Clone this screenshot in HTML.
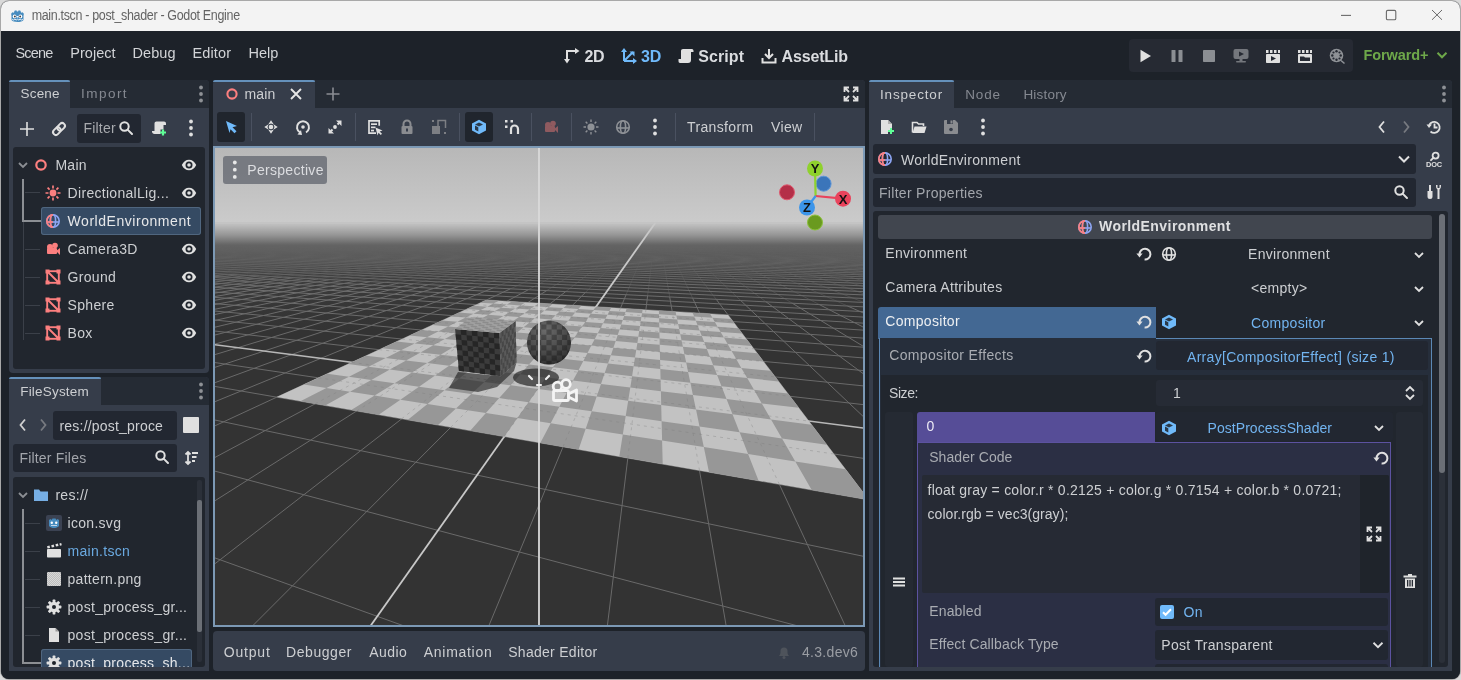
<!DOCTYPE html><html><head><meta charset="utf-8"><style>
html,body{margin:0;padding:0;width:1461px;height:680px;overflow:hidden;background:#d9d9d9}
.t{position:absolute;white-space:nowrap;font-family:"Liberation Sans",sans-serif;line-height:1}
svg{overflow:visible}
</style></head><body><div style="position:relative;width:1461px;height:680px;overflow:hidden;will-change:transform">
<div style="position:absolute;left:0px;top:0px;width:1461px;height:680px;background:#d9d9d9;"></div>
<div style="position:absolute;left:1px;top:1px;width:1459px;height:678px;background:#1d2229;border-radius:8px;box-shadow:0 0 0 1px #a8a8a8;"></div>
<div style="position:absolute;left:1px;top:1px;width:1459px;height:30px;background:#f3f3f3;border-radius:8px 8px 0 0;"></div>
<svg style="position:absolute;left:9.5px;top:7.5px;" width="15" height="15" viewBox="0 0 16 16"><path d="M1.2 6.2L2.6 4.6l1.6.5.6-2.1 1.9-.5.7 1.2h1.2l.7-1.2 1.9.5.6 2.1 1.6-.5 1.4 1.6-.4 2.4v4.2C13.3 14.4 11 15 8 15s-5.3-.6-6.4-2.1V8.6z" fill="#478cbf"/><g fill="#fff"><circle cx="4.9" cy="9" r="2"/><circle cx="11.1" cy="9" r="2"/></g><g fill="#414042"><circle cx="5.2" cy="9.1" r="1"/><circle cx="10.8" cy="9.1" r="1"/></g><rect x="7.2" y="8.4" width="1.6" height="1.8" rx=".4" fill="#fff"/><path d="M2.3 12.2l1.6.6 1.3-.9 1.4.9 1.4-.9 1.4.9 1.4-.9 1.3.9 1.6-.6" fill="none" stroke="#fff" stroke-width="0.9"/></svg>
<div class="t" style="left:31.7px;top:10.22px;font-size:12.5px;color:#646464;letter-spacing:-0.3392314189189186px;transform:scaleY(1.12);transform-origin:0 80%;">main.tscn - post_shader - Godot Engine</div>
<svg style="position:absolute;left:1340px;top:8px;" width="14" height="14" viewBox="0 0 14 14"><line x1="1" y1="7.4" x2="11" y2="7.4" stroke="#6a6a6a" stroke-width="1.1"/></svg>
<svg style="position:absolute;left:1384px;top:8px;" width="14" height="14" viewBox="0 0 14 14"><rect x="2.4" y="2.4" width="9.4" height="9.4" rx="1.3" fill="none" stroke="#6a6a6a" stroke-width="1.1"/></svg>
<svg style="position:absolute;left:1430px;top:8px;" width="14" height="14" viewBox="0 0 14 14"><path d="M2 2L12 11.8M12 2L2 11.8" stroke="#6a6a6a" stroke-width="1"/></svg>
<div class="t" style="left:15.4px;top:45.73px;font-size:14.5px;color:#d2d4d7;letter-spacing:-0.7785156250000007px;">Scene</div>
<div class="t" style="left:70.2px;top:45.73px;font-size:14.5px;color:#d2d4d7;letter-spacing:0.045312500000000235px;">Project</div>
<div class="t" style="left:132.4px;top:45.73px;font-size:14.5px;color:#d2d4d7;letter-spacing:0.11796875000000107px;">Debug</div>
<div class="t" style="left:192.4px;top:45.73px;font-size:14.5px;color:#d2d4d7;letter-spacing:0.14437500000000086px;">Editor</div>
<div class="t" style="left:248.5px;top:45.73px;font-size:14.5px;color:#d2d4d7;letter-spacing:-0.040624999999999765px;">Help</div>
<svg style="position:absolute;left:564.0px;top:48.0px;" width="16" height="16" viewBox="0 0 16 16"><g fill="none" stroke="#e0e0e0" stroke-width="2"><path d="M3 14V3h9"/></g><g fill="#e0e0e0"><path d="M11 0l4.5 3L11 6z"/><path d="M0 11l3 4.5L6 11z"/></g></svg>
<svg style="position:absolute;left:621.0px;top:48.0px;" width="16" height="16" viewBox="0 0 16 16"><g fill="none" stroke="#70bafa" stroke-width="2"><path d="M3 13V2.5M3 13h10.5M3 13l9-9"/></g><g fill="#70bafa"><path d="M0 4l3-4 3 4z"/><path d="M12 10l4 3-4 3z"/><path d="M8.5 3.5h5v5z"/></g></svg>
<svg style="position:absolute;left:678.0px;top:48.0px;" width="16" height="16" viewBox="0 0 16 16"><path d="M5 1h9c1 0 1.5 1 1.5 2v1H13v8c0 2-1 3-3 3H2c-1 0-1.5-1-1.5-2v-2H3V3c0-1.2.8-2 2-2z" fill="#e0e0e0"/></svg>
<svg style="position:absolute;left:761.0px;top:48.0px;" width="16" height="16" viewBox="0 0 16 16"><g fill="none" stroke="#e0e0e0" stroke-width="2"><path d="M8 1v9M4 6l4 4 4-4M1.5 10v4.5h13V10"/></g></svg>
<div class="t" style="left:584.4px;top:49.26px;font-size:16px;color:#dadcdf;letter-spacing:-0.2531250000000007px;font-weight:bold;">2D</div>
<div class="t" style="left:641px;top:49.26px;font-size:16px;color:#70bafa;letter-spacing:-0.2531250000000007px;font-weight:bold;">3D</div>
<div class="t" style="left:698.2px;top:49.26px;font-size:16px;color:#dadcdf;letter-spacing:0.09124999999999943px;font-weight:bold;">Script</div>
<div class="t" style="left:781.5px;top:49.26px;font-size:16px;color:#dadcdf;letter-spacing:-0.15290178571428573px;font-weight:bold;">AssetLib</div>
<div style="position:absolute;left:1129px;top:39px;width:224px;height:33px;background:#262a33;border-radius:4px;"></div>
<svg style="position:absolute;left:1136.5px;top:47.5px;" width="16" height="16" viewBox="0 0 16 16"><path d="M3.5 1.8L14 8 3.5 14.2z" fill="#e0e0e0"/></svg>
<svg style="position:absolute;left:1168.7px;top:47.5px;" width="16" height="16" viewBox="0 0 16 16"><g fill="#8b8e93"><rect x="2.5" y="2" width="4" height="12" rx="0.6"/><rect x="9.5" y="2" width="4" height="12" rx="0.6"/></g></svg>
<svg style="position:absolute;left:1200.7px;top:47.5px;" width="16" height="16" viewBox="0 0 16 16"><rect x="2" y="2" width="12" height="12" rx="0.8" fill="#8b8e93"/></svg>
<svg style="position:absolute;left:1232.6px;top:47.5px;" width="16" height="16" viewBox="0 0 16 16"><rect x="0.5" y="1" width="15" height="10" rx="2" fill="#74777d"/><path d="M6 3.5l5 2.5-5 2.5z" fill="#262a33"/><rect x="6.5" y="11" width="3" height="2" fill="#74777d"/><rect x="3" y="13" width="10" height="1.6" rx="0.8" fill="#74777d"/></svg>
<svg style="position:absolute;left:1264.9px;top:47.5px;" width="16" height="16" viewBox="0 0 16 16"><g fill="#e0e0e0"><rect x="1" y="6" width="14" height="9" rx="0.8"/><path d="M1 2h2.5v3H1zM5 2h2.5v3H5zM9 2h2.5v3H9zM13 2h2v3h-2z"/></g><path d="M6 8l5 2.5-5 2.5z" fill="#262a33"/></svg>
<svg style="position:absolute;left:1296.8px;top:47.5px;" width="16" height="16" viewBox="0 0 16 16"><g fill="#e0e0e0"><rect x="1" y="6" width="14" height="9" rx="0.8"/><path d="M1 2h2.5v3H1zM5 2h2.5v3H5zM9 2h2.5v3H9zM13 2h2v3h-2z"/></g><path d="M3 8.5h4l1 1h5v3.5H3z" fill="#262a33"/></svg>
<svg style="position:absolute;left:1329.0px;top:47.5px;" width="16" height="16" viewBox="0 0 16 16"><circle cx="7.5" cy="7.5" r="6.8" fill="#8e9196"/><g fill="#262a33"><circle cx="7.5" cy="3.3" r="1.2"/><circle cx="7.5" cy="11.7" r="1.2"/><circle cx="3.3" cy="7.5" r="1.2"/><circle cx="11.7" cy="7.5" r="1.2"/><circle cx="4.5" cy="4.5" r="1.1"/><circle cx="10.5" cy="10.5" r="1.1"/><circle cx="10.5" cy="4.5" r="1.1"/><circle cx="4.5" cy="10.5" r="1.1"/></g><path d="M12 12.5l3.5 3" stroke="#8e9196" stroke-width="1.6"/></svg>
<div class="t" style="left:1363.4px;top:48.23px;font-size:14.5px;color:#6ea84a;letter-spacing:-0.08102678571428612px;font-weight:bold;">Forward+</div>
<svg style="position:absolute;left:1434.0px;top:47.0px;" width="16" height="16" viewBox="0 0 16 16"><path d="M3.5 5.75L8 10.25L12.5 5.75" fill="none" stroke="#6ea84a" stroke-width="2"/></svg>
<div style="position:absolute;left:9px;top:80px;width:200px;height:293px;background:#363d4a;border-radius:4px;"></div>
<div style="position:absolute;left:70px;top:80px;width:139px;height:28px;background:#252b34;border-radius:0 4px 0 0;"></div>
<div style="position:absolute;left:9px;top:80px;width:61px;height:2px;background:#6591bb;border-radius:3px 3px 0 0;"></div>
<div class="t" style="left:20.5px;top:87.37px;font-size:13.5px;color:#cdcfd2;letter-spacing:0.2px;">Scene</div>
<div class="t" style="left:81px;top:87.37px;font-size:13.5px;color:#858991;letter-spacing:1.46875px;">Import</div>
<svg style="position:absolute;left:193.0px;top:86.0px;" width="16" height="16" viewBox="0 0 16 16"><g fill="#8e9196"><circle cx="8" cy="1.50" r="1.9"/><circle cx="8" cy="8" r="1.9"/><circle cx="8" cy="14.50" r="1.9"/></g></svg>
<svg style="position:absolute;left:19.1px;top:120.5px;" width="16" height="16" viewBox="0 0 16 16"><path d="M8 1.0V15.0M1.0 8H15.0" stroke="#e0e0e0" stroke-width="1.6"/></svg>
<svg style="position:absolute;left:50.9px;top:120.5px;" width="16" height="16" viewBox="0 0 16 16"><g fill="none" stroke="#e0e0e0" stroke-width="2" transform="rotate(-45 8 8)"><rect x="0.8" y="5.2" width="8.4" height="5.6" rx="2.8"/><rect x="6.8" y="5.2" width="8.4" height="5.6" rx="2.8"/></g></svg>
<div style="position:absolute;left:77px;top:114px;width:64px;height:28.5px;background:#222731;border-radius:3px;"></div>
<div class="t" style="left:83.5px;top:121.15px;font-size:14px;color:#a8aaae;letter-spacing:0.2px;">Filter</div>
<svg style="position:absolute;left:118.4px;top:120.0px;" width="16" height="16" viewBox="0 0 16 16"><g fill="none" stroke="#e0e0e0" stroke-width="2"><circle cx="6.5" cy="6.5" r="4.2"/><path d="M9.6 9.6l4.4 4.4" stroke-linecap="round"/></g></svg>
<svg style="position:absolute;left:150.5px;top:120.0px;" width="16" height="16" viewBox="0 0 16 16"><path d="M5.5 1.5h7.5c1.2 0 2 .8 2 2v1.5h-2.5v4.5h-3v4.5H3.5c-1.4 0-2.5-1-2.5-2.2V11h2.5V3.5c0-1.2.8-2 2-2z" fill="#e0e0e0"/><path d="M12 9.5v6M9 12.5h6" stroke="#5fff97" stroke-width="2.2"/></svg>
<svg style="position:absolute;left:183.0px;top:120.3px;" width="16" height="16" viewBox="0 0 16 16"><g fill="#e0e0e0"><circle cx="8" cy="1.50" r="1.9"/><circle cx="8" cy="8" r="1.9"/><circle cx="8" cy="14.50" r="1.9"/></g></svg>
<div style="position:absolute;left:13px;top:147px;width:192px;height:222px;background:#21262e;border-radius:3px;"></div>
<div style="position:absolute;left:22px;top:179px;width:2px;height:42px;background:#8c8f94;"></div>
<div style="position:absolute;left:22px;top:220px;width:19px;height:2px;background:#8c8f94;"></div>
<div style="position:absolute;left:22.5px;top:222px;width:1px;height:118px;background:#3b4049;"></div>
<div style="position:absolute;left:25px;top:192px;width:15px;height:1px;background:#3b4049;"></div>
<div style="position:absolute;left:25px;top:249px;width:15px;height:1px;background:#3b4049;"></div>
<div style="position:absolute;left:25px;top:277px;width:15px;height:1px;background:#3b4049;"></div>
<div style="position:absolute;left:25px;top:305px;width:15px;height:1px;background:#3b4049;"></div>
<div style="position:absolute;left:25px;top:333px;width:15px;height:1px;background:#3b4049;"></div>
<div style="position:absolute;left:41px;top:207px;width:160px;height:28px;background:#354a63;border-radius:3px;box-shadow:inset 0 0 0 1px #50667f;"></div>
<svg style="position:absolute;left:14.7px;top:157.0px;" width="16" height="16" viewBox="0 0 16 16"><path d="M4.0 6.0L8 10.0L12.0 6.0" fill="none" stroke="#8c8f94" stroke-width="1.8"/></svg>
<svg style="position:absolute;left:33.0px;top:157.0px;" width="16" height="16" viewBox="0 0 16 16"><circle cx="8" cy="8" r="4.7" fill="none" stroke="#fc7f7f" stroke-width="2.2"/></svg>
<div class="t" style="left:55.4px;top:158.25px;font-size:14px;color:#cdcfd2;letter-spacing:0.3px;">Main</div>
<svg style="position:absolute;left:45.0px;top:184.8px;" width="16" height="16" viewBox="0 0 16 16"><circle cx="8" cy="8" r="3.4" fill="#fc7f7f"/><g stroke="#fc7f7f" stroke-width="1.7"><path d="M8 0.5v3M8 12.5v3M0.5 8h3M12.5 8h3M2.6 2.6l2 2M11.4 11.4l2 2M13.4 2.6l-2 2M4.6 11.4l-2 2"/></g></svg>
<div class="t" style="left:67.6px;top:186.15px;font-size:14px;color:#cdcfd2;letter-spacing:0.3px;">DirectionalLig...</div>
<svg style="position:absolute;left:45.0px;top:213.0px;" width="16" height="16" viewBox="0 0 16 16"><defs><clipPath id="gl5302210"><rect x="0" y="0" width="8" height="16"/></clipPath></defs><g fill="none" stroke-width="1.6"><g stroke="#8da5f3"><circle cx="8" cy="8" r="6.2"/><ellipse cx="8" cy="8" rx="2.6" ry="6.2"/><path d="M2 9h12"/></g><g stroke="#fc7f7f" clip-path="url(#gl5302210)"><circle cx="8" cy="8" r="6.2"/><ellipse cx="8" cy="8" rx="2.6" ry="6.2"/><path d="M2 9h12"/></g></g></svg>
<div class="t" style="left:67.6px;top:214.35px;font-size:14px;color:#e6e7e9;letter-spacing:0.5401041666666667px;">WorldEnvironment</div>
<svg style="position:absolute;left:45.0px;top:241.0px;" width="16" height="16" viewBox="0 0 16 16"><g fill="#fc7f7f"><circle cx="5" cy="6" r="3"/><circle cx="10" cy="4.5" r="2.8"/><rect x="2" y="7" width="10" height="6" rx="1"/><path d="M11 10l4-3v7z"/></g></svg>
<div class="t" style="left:67.6px;top:242.35px;font-size:14px;color:#cdcfd2;letter-spacing:0.3px;">Camera3D</div>
<svg style="position:absolute;left:45.0px;top:269.0px;" width="16" height="16" viewBox="0 0 16 16"><g fill="none" stroke="#fc7f7f" stroke-width="1.9"><rect x="2.2" y="2.2" width="11.6" height="11.6"/><path d="M2.5 2.5l11 11"/></g><g fill="#fc7f7f"><rect x="0.5" y="0.5" width="4" height="4"/><rect x="11.5" y="0.5" width="4" height="4"/><rect x="0.5" y="11.5" width="4" height="4"/><rect x="11.5" y="11.5" width="4" height="4"/></g></svg>
<div class="t" style="left:67.6px;top:270.35px;font-size:14px;color:#cdcfd2;letter-spacing:0.3px;">Ground</div>
<svg style="position:absolute;left:45.0px;top:297.0px;" width="16" height="16" viewBox="0 0 16 16"><g fill="none" stroke="#fc7f7f" stroke-width="1.9"><rect x="2.2" y="2.2" width="11.6" height="11.6"/><path d="M2.5 2.5l11 11"/></g><g fill="#fc7f7f"><rect x="0.5" y="0.5" width="4" height="4"/><rect x="11.5" y="0.5" width="4" height="4"/><rect x="0.5" y="11.5" width="4" height="4"/><rect x="11.5" y="11.5" width="4" height="4"/></g></svg>
<div class="t" style="left:67.6px;top:298.35px;font-size:14px;color:#cdcfd2;letter-spacing:0.3px;">Sphere</div>
<svg style="position:absolute;left:45.0px;top:325.0px;" width="16" height="16" viewBox="0 0 16 16"><g fill="none" stroke="#fc7f7f" stroke-width="1.9"><rect x="2.2" y="2.2" width="11.6" height="11.6"/><path d="M2.5 2.5l11 11"/></g><g fill="#fc7f7f"><rect x="0.5" y="0.5" width="4" height="4"/><rect x="11.5" y="0.5" width="4" height="4"/><rect x="0.5" y="11.5" width="4" height="4"/><rect x="11.5" y="11.5" width="4" height="4"/></g></svg>
<div class="t" style="left:67.6px;top:326.35px;font-size:14px;color:#cdcfd2;letter-spacing:0.3px;">Box</div>
<svg style="position:absolute;left:180.8px;top:157.0px;" width="16" height="16" viewBox="0 0 16 16"><path d="M0.8 8C2.6 4.3 5.1 2.7 8 2.7s5.4 1.6 7.2 5.3c-1.8 3.7-4.3 5.3-7.2 5.3S2.6 11.7.8 8z" fill="#e0e0e0"/><circle cx="8" cy="8" r="3.5" fill="#21262e"/><circle cx="8" cy="8" r="1.8" fill="#e0e0e0"/></svg>
<svg style="position:absolute;left:180.8px;top:184.8px;" width="16" height="16" viewBox="0 0 16 16"><path d="M0.8 8C2.6 4.3 5.1 2.7 8 2.7s5.4 1.6 7.2 5.3c-1.8 3.7-4.3 5.3-7.2 5.3S2.6 11.7.8 8z" fill="#e0e0e0"/><circle cx="8" cy="8" r="3.5" fill="#21262e"/><circle cx="8" cy="8" r="1.8" fill="#e0e0e0"/></svg>
<svg style="position:absolute;left:180.8px;top:241.0px;" width="16" height="16" viewBox="0 0 16 16"><path d="M0.8 8C2.6 4.3 5.1 2.7 8 2.7s5.4 1.6 7.2 5.3c-1.8 3.7-4.3 5.3-7.2 5.3S2.6 11.7.8 8z" fill="#e0e0e0"/><circle cx="8" cy="8" r="3.5" fill="#21262e"/><circle cx="8" cy="8" r="1.8" fill="#e0e0e0"/></svg>
<svg style="position:absolute;left:180.8px;top:269.0px;" width="16" height="16" viewBox="0 0 16 16"><path d="M0.8 8C2.6 4.3 5.1 2.7 8 2.7s5.4 1.6 7.2 5.3c-1.8 3.7-4.3 5.3-7.2 5.3S2.6 11.7.8 8z" fill="#e0e0e0"/><circle cx="8" cy="8" r="3.5" fill="#21262e"/><circle cx="8" cy="8" r="1.8" fill="#e0e0e0"/></svg>
<svg style="position:absolute;left:180.8px;top:297.0px;" width="16" height="16" viewBox="0 0 16 16"><path d="M0.8 8C2.6 4.3 5.1 2.7 8 2.7s5.4 1.6 7.2 5.3c-1.8 3.7-4.3 5.3-7.2 5.3S2.6 11.7.8 8z" fill="#e0e0e0"/><circle cx="8" cy="8" r="3.5" fill="#21262e"/><circle cx="8" cy="8" r="1.8" fill="#e0e0e0"/></svg>
<svg style="position:absolute;left:180.8px;top:325.0px;" width="16" height="16" viewBox="0 0 16 16"><path d="M0.8 8C2.6 4.3 5.1 2.7 8 2.7s5.4 1.6 7.2 5.3c-1.8 3.7-4.3 5.3-7.2 5.3S2.6 11.7.8 8z" fill="#e0e0e0"/><circle cx="8" cy="8" r="3.5" fill="#21262e"/><circle cx="8" cy="8" r="1.8" fill="#e0e0e0"/></svg>
<div style="position:absolute;left:9px;top:377px;width:200px;height:294px;background:#363d4a;border-radius:4px;"></div>
<div style="position:absolute;left:101px;top:377px;width:108px;height:28px;background:#252b34;border-radius:0 4px 0 0;"></div>
<div style="position:absolute;left:9px;top:377px;width:92px;height:2px;background:#6591bb;border-radius:3px 3px 0 0;"></div>
<div class="t" style="left:20.2px;top:384.57px;font-size:13.5px;color:#cdcfd2;letter-spacing:0.2px;">FileSystem</div>
<svg style="position:absolute;left:193.0px;top:383.0px;" width="16" height="16" viewBox="0 0 16 16"><g fill="#8e9196"><circle cx="8" cy="1.50" r="1.9"/><circle cx="8" cy="8" r="1.9"/><circle cx="8" cy="14.50" r="1.9"/></g></svg>
<svg style="position:absolute;left:15.0px;top:417.0px;" width="16" height="16" viewBox="0 0 16 16"><path d="M10 2.5L5.5 8L10 13.5" fill="none" stroke="#d0d0d0" stroke-width="1.8"/></svg>
<svg style="position:absolute;left:35.0px;top:417.0px;" width="16" height="16" viewBox="0 0 16 16"><path d="M6 2.5L10.5 8L6 13.5" fill="none" stroke="#777a80" stroke-width="1.8"/></svg>
<div style="position:absolute;left:53px;top:411px;width:124px;height:29px;background:#222731;border-radius:3px;"></div>
<div class="t" style="left:59.5px;top:418.65px;font-size:14px;color:#cdcfd2;letter-spacing:0.2px;">res://post_proce</div>
<div style="position:absolute;left:183px;top:417px;width:16px;height:16px;background:#e0e0e0;border-radius:1px;"></div>
<div style="position:absolute;left:13px;top:444px;width:164px;height:28px;background:#222731;border-radius:3px;"></div>
<div class="t" style="left:19.4px;top:451.15px;font-size:14px;color:#a3a6ac;letter-spacing:0.2px;">Filter Files</div>
<svg style="position:absolute;left:153.8px;top:449.4px;" width="16" height="16" viewBox="0 0 16 16"><g fill="none" stroke="#e0e0e0" stroke-width="2"><circle cx="6.5" cy="6.5" r="4.2"/><path d="M9.6 9.6l4.4 4.4" stroke-linecap="round"/></g></svg>
<svg style="position:absolute;left:183.0px;top:450.0px;" width="16" height="16" viewBox="0 0 16 16"><g stroke="#e0e0e0" stroke-width="1.8" fill="none"><path d="M5 2v12M2.5 4.5L5 2l2.5 2.5M2.5 11.5L5 14l2.5-2.5"/><path d="M9 3h6M9 7h4.5M9 11h3"/></g></svg>
<div style="position:absolute;left:13px;top:477px;width:192px;height:190px;background:#21262e;border-radius:3px;"></div>
<div style="position:absolute;left:22px;top:509px;width:2px;height:155px;background:#8c8f94;"></div>
<div style="position:absolute;left:22px;top:662px;width:19px;height:2px;background:#8c8f94;"></div>
<div style="position:absolute;left:25px;top:523px;width:15px;height:1px;background:#3b4049;"></div>
<div style="position:absolute;left:25px;top:551px;width:15px;height:1px;background:#3b4049;"></div>
<div style="position:absolute;left:25px;top:579px;width:15px;height:1px;background:#3b4049;"></div>
<div style="position:absolute;left:25px;top:607px;width:15px;height:1px;background:#3b4049;"></div>
<div style="position:absolute;left:25px;top:635px;width:15px;height:1px;background:#3b4049;"></div>
<div style="position:absolute;left:41px;top:649px;width:151px;height:30px;background:#354a63;border-radius:3px;box-shadow:inset 0 0 0 1px #50667f;"></div>
<svg style="position:absolute;left:14.7px;top:487.0px;" width="16" height="16" viewBox="0 0 16 16"><path d="M4.0 6.0L8 10.0L12.0 6.0" fill="none" stroke="#8c8f94" stroke-width="1.8"/></svg>
<svg style="position:absolute;left:33.0px;top:487.0px;" width="16" height="16" viewBox="0 0 16 16"><path d="M1 2.5h5l1.5 2H15v9.5H1z" fill="#76aee4"/></svg>
<div class="t" style="left:55.4px;top:488.35px;font-size:14px;color:#cdcfd2;letter-spacing:0.3px;">res://</div>
<svg style="position:absolute;left:45.5px;top:514.8px;" width="16" height="16" viewBox="0 0 16 16"><rect x="0" y="0" width="16" height="16" rx="2" fill="#3b4252"/><path d="M3 5l1.5-1 1 1 1-1.5h3l1 1.5 1-1 1.5 1v6c-1.5 1.5-3 2-5 2s-3.5-.5-5-2z" fill="#478cbf"/><g fill="#fff"><circle cx="5.8" cy="7.8" r="1.2"/><circle cx="10.2" cy="7.8" r="1.2"/></g><path d="M5 10.5h6" stroke="#dfe9f5" stroke-width="0.8"/></svg>
<div class="t" style="left:67.5px;top:516.15px;font-size:14px;color:#cdcfd2;letter-spacing:0.3px;">icon.svg</div>
<svg style="position:absolute;left:45.5px;top:542.7px;" width="16" height="16" viewBox="0 0 16 16"><g fill="#e0e0e0"><rect x="1" y="6" width="14" height="8.5" rx="0.8"/><path d="M1 3.2l2.5-.6.6 2.3-2.5.6zM5.2 2.2l2.5-.6.6 2.3-2.5.6zM9.4 1.2l2.5-.6.6 2.3-2.5.6zM13.4.4l1.8-.4.6 2.3-1.8.4z"/></g></svg>
<div class="t" style="left:67.5px;top:544.05px;font-size:14px;color:#6aa9e0;letter-spacing:0.3px;">main.tscn</div>
<svg style="position:absolute;left:45.5px;top:570.9px;" width="16" height="16" viewBox="0 0 16 16"><defs><pattern id="pt" width="2" height="2" patternUnits="userSpaceOnUse"><rect width="2" height="2" fill="#d8d8d8"/><rect width="1" height="1" fill="#bdbdbd"/><rect x="1" y="1" width="1" height="1" fill="#bdbdbd"/></pattern></defs><rect x="1" y="1" width="14" height="14" rx="1" fill="url(#pt)"/></svg>
<div class="t" style="left:67.5px;top:572.25px;font-size:14px;color:#cdcfd2;letter-spacing:0.3px;">pattern.png</div>
<svg style="position:absolute;left:45.5px;top:598.5px;" width="16" height="16" viewBox="0 0 16 16"><g fill="#e0e0e0"><rect x="6.6" y="0.6" width="2.8" height="4" rx="0.6" transform="rotate(0 8 8)"/><rect x="6.6" y="0.6" width="2.8" height="4" rx="0.6" transform="rotate(45 8 8)"/><rect x="6.6" y="0.6" width="2.8" height="4" rx="0.6" transform="rotate(90 8 8)"/><rect x="6.6" y="0.6" width="2.8" height="4" rx="0.6" transform="rotate(135 8 8)"/><rect x="6.6" y="0.6" width="2.8" height="4" rx="0.6" transform="rotate(180 8 8)"/><rect x="6.6" y="0.6" width="2.8" height="4" rx="0.6" transform="rotate(225 8 8)"/><rect x="6.6" y="0.6" width="2.8" height="4" rx="0.6" transform="rotate(270 8 8)"/><rect x="6.6" y="0.6" width="2.8" height="4" rx="0.6" transform="rotate(315 8 8)"/><circle cx="8" cy="8" r="5.2"/></g><circle cx="8" cy="8" r="2" fill="#1d2229"/></svg>
<div class="t" style="left:67.5px;top:599.85px;font-size:14px;color:#cdcfd2;letter-spacing:0.3px;">post_process_gr...</div>
<svg style="position:absolute;left:45.5px;top:626.7px;" width="16" height="16" viewBox="0 0 16 16"><path d="M3 1h6.5l3.5 3.5V15H3z" fill="#e0e0e0"/><path d="M9.5 1v3.5H13" fill="#999" /></svg>
<div class="t" style="left:67.5px;top:628.05px;font-size:14px;color:#cdcfd2;letter-spacing:0.3px;">post_process_gr...</div>
<svg style="position:absolute;left:45.5px;top:654.5px;" width="16" height="16" viewBox="0 0 16 16"><g fill="#e0e0e0"><rect x="6.6" y="0.6" width="2.8" height="4" rx="0.6" transform="rotate(0 8 8)"/><rect x="6.6" y="0.6" width="2.8" height="4" rx="0.6" transform="rotate(45 8 8)"/><rect x="6.6" y="0.6" width="2.8" height="4" rx="0.6" transform="rotate(90 8 8)"/><rect x="6.6" y="0.6" width="2.8" height="4" rx="0.6" transform="rotate(135 8 8)"/><rect x="6.6" y="0.6" width="2.8" height="4" rx="0.6" transform="rotate(180 8 8)"/><rect x="6.6" y="0.6" width="2.8" height="4" rx="0.6" transform="rotate(225 8 8)"/><rect x="6.6" y="0.6" width="2.8" height="4" rx="0.6" transform="rotate(270 8 8)"/><rect x="6.6" y="0.6" width="2.8" height="4" rx="0.6" transform="rotate(315 8 8)"/><circle cx="8" cy="8" r="5.2"/></g><circle cx="8" cy="8" r="2" fill="#1d2229"/></svg>
<div class="t" style="left:67.5px;top:655.85px;font-size:14px;color:#e6e7e9;letter-spacing:0.3px;">post_process_sh...</div>
<div style="position:absolute;left:9px;top:667px;width:200px;height:4px;background:#363d4a;"></div>
<div style="position:absolute;left:196.5px;top:480px;width:5px;height:182px;background:#2b3039;border-radius:2px;"></div>
<div style="position:absolute;left:196.5px;top:500px;width:5px;height:132px;background:#6b6f76;border-radius:2px;"></div>
<div style="position:absolute;left:213px;top:80px;width:652px;height:547px;background:#363d4a;border-radius:4px;"></div>
<div style="position:absolute;left:315px;top:80px;width:550px;height:28px;background:#252b34;border-radius:0 4px 0 0;"></div>
<div style="position:absolute;left:213px;top:80px;width:102px;height:2px;background:#6591bb;border-radius:3px 3px 0 0;"></div>
<svg style="position:absolute;left:223.9px;top:86.0px;" width="16" height="16" viewBox="0 0 16 16"><circle cx="8" cy="8" r="4.6" fill="none" stroke="#fc7f7f" stroke-width="2.1"/></svg>
<div class="t" style="left:244.4px;top:86.95px;font-size:14px;color:#cdcfd2;letter-spacing:0.2px;">main</div>
<svg style="position:absolute;left:288.0px;top:86.0px;" width="16" height="16" viewBox="0 0 16 16"><path d="M3.0 3.0L13.0 13.0M13.0 3.0L3.0 13.0" stroke="#e6e6e6" stroke-width="1.9"/></svg>
<svg style="position:absolute;left:324.9px;top:86.0px;" width="16" height="16" viewBox="0 0 16 16"><path d="M8 1.5V14.5M1.5 8H14.5" stroke="#8a8d93" stroke-width="1.6"/></svg>
<svg style="position:absolute;left:843.0px;top:86.0px;" width="16" height="16" viewBox="0 0 16 16"><g stroke="#e0e0e0" stroke-width="1.8" fill="none"><path d="M1.5 6V1.5H6M1.5 1.5l4.5 4.5M10 1.5h4.5V6M14.5 1.5L10 6M1.5 10v4.5H6M1.5 14.5L6 10M14.5 10v4.5H10M14.5 14.5L10 10"/></g></svg>
<div style="position:absolute;left:217px;top:112px;width:28px;height:30px;background:#20252d;border-radius:3px;"></div>
<div style="position:absolute;left:465px;top:112px;width:28px;height:30px;background:#20252d;border-radius:3px;"></div>
<div style="position:absolute;left:250.5px;top:113px;width:1px;height:28px;background:#4a5160;"></div>
<div style="position:absolute;left:354.5px;top:113px;width:1px;height:28px;background:#4a5160;"></div>
<div style="position:absolute;left:458.5px;top:113px;width:1px;height:28px;background:#4a5160;"></div>
<div style="position:absolute;left:530.5px;top:113px;width:1px;height:28px;background:#4a5160;"></div>
<div style="position:absolute;left:570.5px;top:113px;width:1px;height:28px;background:#4a5160;"></div>
<div style="position:absolute;left:674.5px;top:113px;width:1px;height:28px;background:#4a5160;"></div>
<div style="position:absolute;left:813.5px;top:113px;width:1px;height:28px;background:#4a5160;"></div>
<svg style="position:absolute;left:223.0px;top:119.0px;" width="16" height="16" viewBox="0 0 16 16"><path d="M3 2l11 5-4.5 1.3 4 4-2 2-4-4L6.5 14z" fill="#70bafa"/></svg>
<svg style="position:absolute;left:263.0px;top:119.0px;" width="16" height="16" viewBox="0 0 16 16"><g fill="#e0e0e0"><path d="M5.2 5.6L8 1.3l2.8 4.3L8 4.5z" transform="rotate(0 8 8)"/><path d="M5.2 5.6L8 1.3l2.8 4.3L8 4.5z" transform="rotate(90 8 8)"/><path d="M5.2 5.6L8 1.3l2.8 4.3L8 4.5z" transform="rotate(180 8 8)"/><path d="M5.2 5.6L8 1.3l2.8 4.3L8 4.5z" transform="rotate(270 8 8)"/><circle cx="8" cy="8" r="2.3"/></g></svg>
<svg style="position:absolute;left:295.0px;top:119.0px;" width="16" height="16" viewBox="0 0 16 16"><path d="M5 13.5A6 6 0 1 1 11 13.5" fill="none" stroke="#e0e0e0" stroke-width="2"/><path d="M2.5 15.5L6 11l1 5z" fill="#e0e0e0"/><circle cx="8" cy="8" r="1.8" fill="#e0e0e0"/></svg>
<svg style="position:absolute;left:327.0px;top:119.0px;" width="16" height="16" viewBox="0 0 16 16"><g fill="#e0e0e0"><path d="M9 1.5h5.5V7zM7 14.5H1.5V9z"/><circle cx="8" cy="8" r="1.9"/></g><path d="M12 4L10.5 5.5M4 12l1.5-1.5" stroke="#e0e0e0" stroke-width="2"/></svg>
<svg style="position:absolute;left:366.6px;top:119.0px;" width="16" height="16" viewBox="0 0 16 16"><path d="M9 14.2H2V1.8h10.2v5" fill="none" stroke="#e0e0e0" stroke-width="1.7"/><g fill="#e0e0e0"><rect x="4" y="4.3" width="6" height="1.7"/><rect x="4" y="7.5" width="4.5" height="1.7"/><rect x="4" y="10.7" width="3" height="1.7"/><path d="M8.5 8.5l7 3-2.8 1 2.3 2.3-1.2 1.2-2.3-2.3-1 2.8z"/></g></svg>
<svg style="position:absolute;left:399.0px;top:119.0px;" width="16" height="16" viewBox="0 0 16 16"><path d="M4.5 7V5a3.5 3.5 0 0 1 7 0v2" fill="none" stroke="#8a8c90" stroke-width="2"/><rect x="2.5" y="7" width="11" height="8" rx="1" fill="#8a8c90"/><rect x="7" y="9.5" width="2" height="3" fill="#363d4a"/></svg>
<svg style="position:absolute;left:431.0px;top:119.0px;" width="16" height="16" viewBox="0 0 16 16"><g fill="#7d7f84"><rect x="1" y="7" width="8" height="8"/><rect x="1" y="1" width="2" height="2"/><rect x="13" y="13" width="2" height="2"/></g><path d="M7 7V1.5h7.5V9" fill="none" stroke="#7d7f84" stroke-width="1.5"/></svg>
<svg style="position:absolute;left:471.0px;top:119.0px;" width="16" height="16" viewBox="0 0 16 16"><path d="M8 0.8l7 3.6v7.2L8 15.2l-7-3.6V4.4z" fill="#70bafa"/><path d="M4 5.5L8 3.5l4 2-4 2z" fill="#1d2229" opacity="0.85"/><path d="M4 6.5l3.3 1.7v4.3L4 10.8z" fill="#1d2229" opacity="0.85"/></svg>
<svg style="position:absolute;left:503.5px;top:119.0px;" width="16" height="16" viewBox="0 0 16 16"><g fill="#e0e0e0"><rect x="1" y="1" width="2.5" height="2.5"/><rect x="6.5" y="1" width="2.5" height="2.5"/><rect x="1" y="6.5" width="2.5" height="2.5"/></g><path d="M7 15V10a3.5 3.5 0 0 1 7 0v5" fill="none" stroke="#e0e0e0" stroke-width="2.2"/></svg>
<svg style="position:absolute;left:542.5px;top:119.0px;" width="16" height="16" viewBox="0 0 16 16"><g fill="#8f5a5f"><circle cx="5" cy="6" r="3"/><circle cx="10" cy="4.5" r="2.8"/><rect x="2" y="7" width="10" height="6" rx="1"/><path d="M11 10l4-3v7z"/></g></svg>
<svg style="position:absolute;left:583.0px;top:119.0px;" width="16" height="16" viewBox="0 0 16 16"><circle cx="8" cy="8" r="3.6" fill="#8e9196"/><g stroke="#8e9196" stroke-width="1.4"><path d="M8 0.5v2.5M8 13v2.5M0.5 8H3M13 8h2.5M2.7 2.7l1.7 1.7M11.6 11.6l1.7 1.7M13.3 2.7l-1.7 1.7M4.4 11.6l-1.7 1.7"/></g></svg>
<svg style="position:absolute;left:615.0px;top:119.0px;" width="16" height="16" viewBox="0 0 16 16"><g fill="none" stroke="#8e9196" stroke-width="1.6"><circle cx="8" cy="8" r="6.3"/><ellipse cx="8" cy="8" rx="2.6" ry="6.3"/><path d="M2 9h12"/></g></svg>
<svg style="position:absolute;left:646.9px;top:119.0px;" width="16" height="16" viewBox="0 0 16 16"><g fill="#e0e0e0"><circle cx="8" cy="1.50" r="1.9"/><circle cx="8" cy="8" r="1.9"/><circle cx="8" cy="14.50" r="1.9"/></g></svg>
<div class="t" style="left:687px;top:120.15px;font-size:14px;color:#cdcfd2;letter-spacing:0.35px;">Transform</div>
<div class="t" style="left:771px;top:120.15px;font-size:14px;color:#cdcfd2;letter-spacing:0.35px;">View</div>
<svg style="position:absolute;left:213px;top:146px" width="652" height="481" viewBox="213 146 652 481">
<defs><linearGradient id="sky" x1="0" y1="146" x2="0" y2="224" gradientUnits="userSpaceOnUse"><stop offset="0" stop-color="#b7b7b7"/><stop offset="1" stop-color="#cbcbcb"/></linearGradient><linearGradient id="fog" x1="0" y1="222" x2="0" y2="332" gradientUnits="userSpaceOnUse"><stop offset="0.0000" stop-color="#c4c4c4" stop-opacity="1"/><stop offset="0.0273" stop-color="#c4c4c4" stop-opacity="0.95"/><stop offset="0.1182" stop-color="#c4c4c4" stop-opacity="0.68"/><stop offset="0.2091" stop-color="#c4c4c4" stop-opacity="0.33"/><stop offset="0.3000" stop-color="#c4c4c4" stop-opacity="0.19"/><stop offset="0.3909" stop-color="#c4c4c4" stop-opacity="0.13"/><stop offset="0.5273" stop-color="#c4c4c4" stop-opacity="0.07"/><stop offset="0.7091" stop-color="#c4c4c4" stop-opacity="0.03"/><stop offset="1.0000" stop-color="#c4c4c4" stop-opacity="0"/></linearGradient><radialGradient id="sph" cx="0.42" cy="0.22" r="0.85"><stop offset="0" stop-color="#6a6a6a"/><stop offset="0.6" stop-color="#4a4a4a"/><stop offset="1" stop-color="#2c2c2c"/></radialGradient><linearGradient id="gfade" x1="0" y1="244" x2="0" y2="290" gradientUnits="userSpaceOnUse"><stop offset="0" stop-color="#fff" stop-opacity="0"/><stop offset="0.3" stop-color="#fff" stop-opacity="0.45"/><stop offset="1" stop-color="#fff" stop-opacity="1"/></linearGradient><mask id="gmask" maskUnits="userSpaceOnUse" x="213" y="146" width="652" height="481"><rect x="213" y="146" width="652" height="481" fill="url(#gfade)"/></mask><clipPath id="vpc"><rect x="213" y="146" width="652" height="481"/></clipPath><clipPath id="sphc"><circle cx="549" cy="342.6" r="22"/></clipPath></defs>
<g clip-path="url(#vpc)">
<rect x="213" y="146" width="652" height="481" fill="#333333"/>
<rect x="213" y="146" width="652" height="78" fill="url(#sky)"/>
<g mask="url(#gmask)"><path d="M-621.5 290.8L-54.7 259.8M-620.3 291.7L-49.7 260.1M-619.0 292.6L-44.5 260.4M-617.8 293.6L-39.2 260.6M-616.5 294.6L-33.9 260.9M-615.1 295.6L-28.5 261.2M-613.8 296.6L-23.0 261.5M-612.3 297.7L-17.4 261.7M-610.9 298.8L-11.7 262.0M-609.4 300.0L-5.9 262.3M-607.8 301.2L-0.1 262.6M-606.2 302.4L5.9 262.9M-604.5 303.7L12.0 263.2M-602.8 305.0L18.2 263.6M-601.0 306.3L24.5 263.9M-599.2 307.7L30.9 264.2M-597.3 309.2L37.4 264.5M-595.3 310.7L44.0 264.9M-593.2 312.3L50.7 265.2M-591.1 313.9L57.6 265.6M-588.9 315.6L64.6 265.9M-586.6 317.3L71.7 266.3M-584.2 319.1L79.0 266.7M-581.7 321.0L86.4 267.1M-579.1 323.0L93.9 267.4M-576.4 325.1L101.6 267.8M-573.6 327.2L109.5 268.2M-570.6 329.5L117.4 268.6M-567.5 331.8L125.6 269.1M-564.3 334.3L133.9 269.5M-560.9 336.8L142.4 269.9M-557.4 339.5L151.0 270.4M-553.6 342.4L159.8 270.8M-549.7 345.4L168.8 271.3M-545.6 348.5L178.0 271.7M-541.2 351.8L187.4 272.2M-536.6 355.3L197.0 272.7M-531.8 359.0L206.8 273.2M-526.6 362.9L216.8 273.7M-521.2 367.0L227.1 274.3M-515.4 371.4L237.5 274.8M-509.2 376.1L248.2 275.3M-502.6 381.2L259.2 275.9M-495.6 386.5L270.4 276.5M-488.0 392.2L281.9 277.1M-479.9 398.4L293.6 277.7M-471.2 405.1L305.6 278.3M-461.8 412.2L318.0 278.9M-451.5 420.0L330.6 279.5M-440.4 428.5L343.5 280.2M-428.3 437.7L356.8 280.9M-415.0 447.8L370.4 281.6M-400.3 459.0L384.3 282.3M-384.1 471.3L398.6 283.0M-366.1 485.0L413.4 283.8M-346.0 500.3L428.5 284.6M-323.3 517.5L444.0 285.3M-297.6 537.1L459.9 286.2M-268.1 559.5L476.3 287.0M-234.1 585.3L493.2 287.9M-194.4 615.6L510.5 288.8M-147.3 651.3L528.4 289.7M-90.7 694.4L546.7 290.6M-21.4 747.1L565.7 291.6M65.6 813.2L585.2 292.6M328.3 1013.0L626.1 294.7M540.5 1174.3L647.6 295.8M862.3 1419.0L669.7 296.9M1408.0 1834.0L692.6 298.1M2536.2 2691.9L716.2 299.3M6247.1 5513.7L740.7 300.5M8485.9 6009.5L766.0 301.8M10193.7 6002.6L792.2 303.2M11901.5 5995.6L819.4 304.6M13609.3 5988.7L847.6 306.0M15317.1 5981.7L876.8 307.5M17024.9 5974.8L907.2 309.0M18732.7 5967.8L938.8 310.7M20440.5 5960.9L971.6 312.3M22148.3 5953.9L1005.7 314.1M23856.1 5947.0L1041.3 315.9M25563.9 5940.0L1078.4 317.8M27271.7 5933.1L1117.0 319.8M28979.5 5926.1L1157.4 321.8M30687.3 5919.2L1199.7 324.0M32395.1 5912.3L1243.8 326.3M34102.9 5905.3L1290.1 328.6M35810.7 5898.4L1338.6 331.1M37518.5 5891.4L1389.6 333.7M39226.3 5884.5L1443.2 336.5M40934.1 5877.5L1499.5 339.3M42641.9 5870.6L1558.9 342.4M44349.7 5863.6L1621.6 345.6M46057.5 5856.7L1687.9 349.0M47765.4 5849.7L1758.0 352.6M49473.2 5842.8L1832.4 356.4M51181.0 5835.8L1911.4 360.4M52888.8 5828.9L1995.5 364.7M54596.6 5821.9L2085.1 369.3M56304.4 5815.0L2180.9 374.2M58012.2 5808.0L2283.6 379.5M59720.0 5801.1L2393.8 385.1M61427.8 5794.1L2512.4 391.2M63135.6 5787.2L2640.5 397.7M64843.4 5780.2L2779.1 404.8M66551.2 5773.3L2929.8 412.5M68259.0 5766.3L3094.1 420.9M69966.8 5759.4L3274.0 430.1M71674.6 5752.4L3471.7 440.2M73382.4 5745.5L3690.1 451.4M75090.2 5738.5L3932.5 463.8M76798.0 5731.6L4203.3 477.7M78505.8 5724.7L4507.7 493.2M80213.6 5717.7L4852.3 510.9M81921.4 5710.8L5245.7 531.0M83629.2 5703.8L5698.9 554.2M85337.0 5696.9L6227.0 581.2M87044.8 5689.9L6849.9 613.0M88752.6 5683.0L7595.8 651.2M90460.4 5676.0L8505.1 697.7M92168.2 5669.1L9638.1 755.7M93876.0 5662.1L11089.0 829.9M95583.8 5655.2L13013.2 928.3M97291.6 5648.2L15687.6 1065.2M98999.4 5641.3L19657.3 1268.2M100707.2 5634.3L26163.6 1601.1M102415.0 5627.4L38779.9 2246.5M104122.8 5620.4L73730.9 4034.4M-699.7 234.1L4113.8 6027.3M-692.4 234.0L9701.3 6004.6M-685.3 234.0L15288.9 5981.8M-678.2 233.9L20876.4 5959.1M-671.2 233.8L26464.0 5936.4M-664.3 233.8L32051.5 5913.7M-657.4 233.7L37639.0 5890.9M-643.9 233.6L48814.1 5845.5M-637.2 233.5L54401.7 5822.7M-630.7 233.4L59989.2 5800.0M-624.1 233.4L65576.7 5777.3M-617.7 233.3L71164.3 5754.5M-611.3 233.3L76751.8 5731.8M-605.0 233.2L82339.4 5709.1M-598.7 233.1L87926.9 5686.3M-592.5 233.1L93514.4 5663.6M-586.4 233.0L99102.0 5640.9M-580.3 233.0L104689.5 5618.1M-574.3 232.9L110277.1 5595.4M-568.3 232.8L115864.6 5572.7M-562.4 232.8L121452.1 5549.9M-556.6 232.7L127039.7 5527.2M-550.8 232.7L132627.2 5504.5M-545.0 232.6L138214.8 5481.7M-539.4 232.6L143802.3 5459.0M-533.7 232.5L149389.8 5436.3M-528.2 232.4L154977.4 5413.5M-522.6 232.4L160564.9 5390.8M-517.2 232.3L166152.5 5368.1M-511.7 232.3L171740.0 5345.3M-506.4 232.2L177327.5 5322.6M-501.0 232.2L182915.1 5299.9M-495.8 232.1L188502.6 5277.1M-490.5 232.1L194090.2 5254.4M-485.4 232.0L199677.7 5231.7M-480.2 232.0L205265.2 5208.9M-475.2 231.9L210852.8 5186.2M-470.1 231.9L216440.3 5163.5M-465.1 231.8L222027.9 5140.7M-460.2 231.8L227615.4 5118.0M-455.3 231.7L233202.9 5095.3M-450.4 231.7L238790.5 5072.5M-445.6 231.6L244378.0 5049.8M-440.8 231.6L249965.6 5027.1M-436.0 231.6L255553.1 5004.3M-431.3 231.5L261140.6 4981.6M-426.7 231.5L266728.2 4958.9M-422.1 231.4L272315.7 4936.1M-417.5 231.4L277903.3 4913.4M-412.9 231.3L283490.8 4890.7M-408.4 231.3L289078.3 4867.9M-404.0 231.2L294665.9 4845.2M-399.5 231.2L300253.4 4822.5M-395.2 231.2L305841.0 4799.8M-390.8 231.1L311428.5 4777.0M-386.5 231.1L317016.0 4754.3M-382.2 231.0L322603.6 4731.6M-377.9 231.0L328191.1 4708.8M-373.7 231.0L333778.7 4686.1M-369.6 230.9L339366.2 4663.4M-365.4 230.9L344953.7 4640.6M-361.3 230.8L350541.3 4617.9M-357.2 230.8L356128.8 4595.2M-353.2 230.8L361716.4 4572.4M-349.2 230.7L367303.9 4549.7M-345.2 230.7L372891.4 4527.0M-341.2 230.6L378479.0 4504.2M-337.3 230.6L384066.5 4481.5M-333.4 230.6L389654.1 4458.8M-329.5 230.5L395241.6 4436.0M-325.7 230.5L400829.1 4413.3M-321.9 230.4L406416.7 4390.6M-318.1 230.4L412004.2 4367.8M-314.4 230.4L417591.8 4345.1M-310.7 230.3L423179.3 4322.4M-307.0 230.3L428766.8 4299.6M-303.3 230.3L434354.4 4276.9M-299.7 230.2L439941.9 4254.2M-296.1 230.2L445529.5 4231.4M-292.5 230.2L451117.0 4208.7M-289.0 230.1L456704.5 4186.0M-285.5 230.1L462292.1 4163.2M-282.0 230.1L467879.6 4140.5M-278.5 230.0L473467.2 4117.8M-275.1 230.0L479054.7 4095.0M-271.6 230.0L484642.3 4072.3M-268.2 229.9L490229.8 4049.6M-264.9 229.9L495817.3 4026.8M-261.5 229.9L501404.9 4004.1M-258.2 229.8L506992.4 3981.4M-254.9 229.8L512580.0 3958.6M-251.6 229.8L518167.5 3935.9M-248.4 229.7L523755.0 3913.2M-245.2 229.7L529342.6 3890.4M-242.0 229.7L534930.1 3867.7M-238.8 229.6L540517.7 3845.0M-235.6 229.6L546105.2 3822.2M-232.5 229.6L551692.7 3799.5M-229.4 229.6L557280.3 3776.8M-226.3 229.5L562867.8 3754.0M-223.2 229.5L568455.4 3731.3M-220.2 229.5L574042.9 3708.6M-217.1 229.4L579630.4 3685.9M-214.1 229.4L585218.0 3663.1M-211.1 229.4L590805.5 3640.4M-208.2 229.3L596393.1 3617.7M-205.2 229.3L601980.6 3594.9M-202.3 229.3L607568.1 3572.2M-199.4 229.3L613155.7 3549.5M-196.5 229.2L618743.2 3526.7M-193.6 229.2L624330.8 3504.0M-190.8 229.2L629918.3 3481.3M-188.0 229.2L635505.8 3458.5M-185.1 229.1L641093.4 3435.8M-182.4 229.1L646680.9 3413.1M-179.6 229.1L652268.5 3390.3M-176.8 229.0L657856.0 3367.6M-174.1 229.0L663443.5 3344.9M-171.4 229.0L669031.1 3322.1M-168.7 229.0L674618.6 3299.4M-166.0 228.9L680206.2 3276.7M-163.3 228.9L685793.7 3253.9M-160.7 228.9L691381.2 3231.2M-158.0 228.9L696968.8 3208.5" stroke="#6a6a6a" stroke-width="1" fill="none"/><path d="M-54.7 259.8L465.0 231.4M-49.7 260.1L467.4 231.5M-44.5 260.4L469.9 231.5M-39.2 260.6L472.4 231.5M-33.9 260.9L474.8 231.5M-28.5 261.2L477.3 231.5M-23.0 261.5L479.8 231.5M-17.4 261.7L482.3 231.5M-11.7 262.0L484.9 231.5M-5.9 262.3L487.4 231.5M-0.1 262.6L489.9 231.6M5.9 262.9L492.5 231.6M12.0 263.2L495.1 231.6M18.2 263.6L497.6 231.6M24.5 263.9L500.2 231.6M30.9 264.2L502.8 231.6M37.4 264.5L505.4 231.6M44.0 264.9L508.0 231.6M50.7 265.2L510.7 231.6M57.6 265.6L513.3 231.7M64.6 265.9L516.0 231.7M71.7 266.3L518.6 231.7M79.0 266.7L521.3 231.7M86.4 267.1L524.0 231.7M93.9 267.4L526.7 231.7M101.6 267.8L529.4 231.7M109.5 268.2L532.2 231.7M117.4 268.6L534.9 231.7M125.6 269.1L537.6 231.8M133.9 269.5L540.4 231.8M142.4 269.9L543.2 231.8M151.0 270.4L546.0 231.8M159.8 270.8L548.8 231.8M168.8 271.3L551.6 231.8M178.0 271.7L554.4 231.8M187.4 272.2L557.2 231.8M197.0 272.7L560.1 231.8M206.8 273.2L563.0 231.9M216.8 273.7L565.8 231.9M227.1 274.3L568.7 231.9M237.5 274.8L571.6 231.9M248.2 275.3L574.5 231.9M259.2 275.9L577.5 231.9M270.4 276.5L580.4 231.9M281.9 277.1L583.4 231.9M293.6 277.7L586.3 232.0M305.6 278.3L589.3 232.0M318.0 278.9L592.3 232.0M330.6 279.5L595.3 232.0M343.5 280.2L598.3 232.0M356.8 280.9L601.4 232.0M370.4 281.6L604.4 232.0M384.3 282.3L607.5 232.0M398.6 283.0L610.6 232.1M413.4 283.8L613.7 232.1M428.5 284.6L616.8 232.1M444.0 285.3L619.9 232.1M459.9 286.2L623.1 232.1M476.3 287.0L626.2 232.1M493.2 287.9L629.4 232.1M510.5 288.8L632.6 232.2M528.4 289.7L635.8 232.2M546.7 290.6L639.0 232.2M565.7 291.6L642.2 232.2M585.2 292.6L645.5 232.2M626.1 294.7L652.0 232.2M647.6 295.8L655.3 232.2M669.7 296.9L658.6 232.3M692.6 298.1L661.9 232.3M716.2 299.3L665.3 232.3M740.7 300.5L668.6 232.3M766.0 301.8L672.0 232.3M792.2 303.2L675.4 232.3M819.4 304.6L678.8 232.3M847.6 306.0L682.2 232.4M876.8 307.5L685.7 232.4M907.2 309.0L689.1 232.4M938.8 310.7L692.6 232.4M971.6 312.3L696.1 232.4M1005.7 314.1L699.6 232.4M1041.3 315.9L703.2 232.5M1078.4 317.8L706.7 232.5M1117.0 319.8L710.3 232.5M1157.4 321.8L713.9 232.5M1199.7 324.0L717.5 232.5M1243.8 326.3L721.1 232.5M1290.1 328.6L724.7 232.5M1338.6 331.1L728.4 232.6M1389.6 333.7L732.1 232.6M1443.2 336.5L735.7 232.6M1499.5 339.3L739.5 232.6M1558.9 342.4L743.2 232.6M1621.6 345.6L746.9 232.6M1687.9 349.0L750.7 232.7M1758.0 352.6L754.5 232.7M1832.4 356.4L758.3 232.7M1911.4 360.4L762.1 232.7M1995.5 364.7L766.0 232.7M2085.1 369.3L769.9 232.7M2180.9 374.2L773.8 232.7M2283.6 379.5L777.7 232.8M2393.8 385.1L781.6 232.8M2512.4 391.2L785.6 232.8M2640.5 397.7L789.5 232.8M2779.1 404.8L793.5 232.8M2929.8 412.5L797.6 232.8M3094.1 420.9L801.6 232.9M3274.0 430.1L805.7 232.9M3471.7 440.2L809.7 232.9M3690.1 451.4L813.8 232.9M3932.5 463.8L818.0 232.9M4203.3 477.7L822.1 233.0M4507.7 493.2L826.3 233.0M4852.3 510.9L830.5 233.0M5245.7 531.0L834.7 233.0M5698.9 554.2L838.9 233.0M6227.0 581.2L843.2 233.0M6849.9 613.0L847.5 233.1M7595.8 651.2L851.8 233.1M8505.1 697.7L856.2 233.1M9638.1 755.7L860.5 233.1M11089.0 829.9L864.9 233.1M13013.2 928.3L869.3 233.2M15687.6 1065.2L873.7 233.2M19657.3 1268.2L878.2 233.2M26163.6 1601.1L882.7 233.2M38779.9 2246.5L887.2 233.2M73730.9 4034.4L891.7 233.2M105830.6 5613.5L896.3 233.3" stroke="#6a6a6a" stroke-opacity="0.4" stroke-width="1" fill="none"/></g>
<rect x="213" y="222" width="652" height="110" fill="url(#fog)"/>
<line x1="-150.8" y1="297.8" x2="1339.1" y2="489.1" stroke="#b8b8b8" stroke-width="1.6"/>
<line x1="269.9" y1="768.3" x2="655.4" y2="222.7" stroke="#c8c8c8" stroke-width="1.8"/>
<polygon points="276.7,397.1 868.9,499.9 728.1,314.9 486.3,300.0" fill="#c2c2c2"/>
<path d="M303.9,384.6L326.4,388.1L348.9,376.7L327.4,373.7ZM348.0,364.1L368.5,366.8L385.7,358.1L366.1,355.7ZM382.2,348.2L401.0,350.3L414.7,343.4L396.7,341.5ZM409.7,335.5L427.0,337.2L438.1,331.6L421.4,330.0ZM432.1,325.1L448.2,326.5L457.3,321.8L441.9,320.6ZM450.8,316.4L465.7,317.6L473.5,313.7L459.1,312.6ZM466.7,309.1L480.6,310.1L487.2,306.7L473.7,305.8ZM480.2,302.8L493.3,303.6L499.0,300.7L486.3,300.0ZM300.4,401.2L325.2,405.5L350.0,391.8L326.4,388.1ZM348.9,376.7L371.3,379.9L389.8,369.6L368.5,366.8ZM385.7,358.1L406.1,360.5L420.5,352.5L401.0,350.3ZM414.7,343.4L433.3,345.3L444.8,338.9L427.0,337.2ZM438.1,331.6L455.2,333.2L464.6,327.9L448.2,326.5ZM457.3,321.8L473.2,323.1L481.1,318.8L465.7,317.6ZM473.5,313.7L488.3,314.8L494.9,311.1L480.6,310.1ZM487.2,306.7L501.0,307.7L506.7,304.5L493.3,303.6ZM350.0,391.8L374.6,395.6L394.6,383.2L371.3,379.9ZM389.8,369.6L412.0,372.5L427.2,363.1L406.1,360.5ZM420.5,352.5L440.6,354.8L452.6,347.4L433.3,345.3ZM444.8,338.9L463.3,340.7L472.9,334.8L455.2,333.2ZM464.6,327.9L481.6,329.4L489.5,324.5L473.2,323.1ZM481.1,318.8L496.8,320.0L503.4,315.9L488.3,314.8ZM494.9,311.1L509.5,312.1L515.2,308.6L501.0,307.7ZM506.7,304.5L520.4,305.4L525.2,302.4L512.0,301.5ZM351.3,410.1L378.7,414.8L400.4,399.7L374.6,395.6ZM394.6,383.2L419.0,386.7L435.1,375.5L412.0,372.5ZM427.2,363.1L449.1,365.7L461.5,357.1L440.6,354.8ZM452.6,347.4L472.5,349.4L482.3,342.6L463.3,340.7ZM472.9,334.8L491.1,336.4L499.1,330.9L481.6,329.4ZM489.5,324.5L506.3,325.8L512.9,321.2L496.8,320.0ZM503.4,315.9L519.0,317.0L524.5,313.2L509.5,312.1ZM515.2,308.6L529.6,309.6L534.4,306.3L520.4,305.4ZM400.4,399.7L427.5,403.9L444.5,390.3L419.0,386.7ZM435.1,375.5L459.2,378.6L472.0,368.5L449.1,365.7ZM461.5,357.1L483.2,359.5L493.1,351.6L472.5,349.4ZM482.3,342.6L501.9,344.5L509.9,338.2L491.1,336.4ZM499.1,330.9L517.1,332.4L523.6,327.3L506.3,325.8ZM512.9,321.2L529.5,322.5L534.9,318.2L519.0,317.0ZM524.5,313.2L539.9,314.2L544.5,310.6L529.6,309.6ZM534.4,306.3L548.7,307.2L552.6,304.1L538.8,303.2ZM407.6,419.9L438.0,425.1L456.0,408.4L427.5,403.9ZM444.5,390.3L471.2,394.1L484.3,381.9L459.2,378.6ZM472.0,368.5L495.7,371.3L505.6,362.0L483.2,359.5ZM493.1,351.6L514.4,353.8L522.3,346.5L501.9,344.5ZM509.9,338.2L529.3,340.0L535.6,334.1L517.1,332.4ZM523.6,327.3L541.3,328.7L546.5,323.9L529.5,322.5ZM534.9,318.2L551.3,319.4L555.6,315.3L539.9,314.2ZM544.5,310.6L559.6,311.6L563.3,308.1L548.7,307.2ZM456.0,408.4L485.9,413.1L499.2,398.1L471.2,394.1ZM484.3,381.9L510.6,385.3L520.4,374.3L495.7,371.3ZM505.6,362.0L529.0,364.6L536.5,356.1L514.4,353.8ZM522.3,346.5L543.3,348.6L549.3,341.8L529.3,340.0ZM535.6,334.1L554.7,335.7L559.6,330.2L541.3,328.7ZM546.5,323.9L564.0,325.2L568.1,320.7L551.3,319.4ZM555.6,315.3L571.8,316.5L575.2,312.6L559.6,311.6ZM563.3,308.1L578.3,309.1L581.3,305.8L566.8,304.9ZM470.2,430.7L504.3,436.6L517.4,418.0L485.9,413.1ZM499.2,398.1L528.5,402.3L538.0,388.9L510.6,385.3ZM520.4,374.3L546.1,377.4L553.2,367.3L529.0,364.6ZM536.5,356.1L559.5,358.5L565.0,350.7L543.3,348.6ZM549.3,341.8L570.0,343.7L574.4,337.4L554.7,335.7ZM559.6,330.2L578.4,331.8L582.0,326.6L564.0,325.2ZM568.1,320.7L585.3,321.9L588.4,317.6L571.8,316.5ZM575.2,312.6L591.1,313.7L593.7,310.1L578.3,309.1ZM517.4,418.0L550.7,423.2L559.3,406.7L528.5,402.3ZM538.0,388.9L566.7,392.7L573.0,380.6L546.1,377.4ZM553.2,367.3L578.5,370.2L583.3,361.0L559.5,358.5ZM565.0,350.7L587.5,352.9L591.3,345.6L570.0,343.7ZM574.4,337.4L594.7,339.2L597.8,333.3L578.4,331.8ZM582.0,326.6L600.5,328.1L603.1,323.2L585.3,321.9ZM588.4,317.6L605.4,318.8L607.5,314.8L591.1,313.7ZM593.7,310.1L609.4,311.1L611.2,307.7L596.1,306.7ZM540.3,442.9L578.6,449.5L585.7,428.7L550.7,423.2ZM559.3,406.7L591.7,411.3L596.7,396.6L566.7,392.7ZM573.0,380.6L601.0,384.0L604.7,373.1L578.5,370.2ZM583.3,361.0L608.0,363.6L610.9,355.2L587.5,352.9ZM591.3,345.6L613.4,347.7L615.7,341.0L594.7,339.2ZM597.8,333.3L617.7,335.0L619.6,329.5L600.5,328.1ZM603.1,323.2L621.3,324.6L622.8,320.1L605.4,318.8ZM607.5,314.8L624.2,315.9L625.5,312.1L609.4,311.1ZM585.7,428.7L622.8,434.5L625.7,416.1L591.7,411.3ZM596.7,396.6L628.2,400.7L630.3,387.5L601.0,384.0ZM604.7,373.1L632.1,376.2L633.6,366.2L608.0,363.6ZM610.9,355.2L635.0,357.5L636.3,349.8L613.4,347.7ZM615.7,341.0L637.4,342.9L638.3,336.7L617.7,335.0ZM619.6,329.5L639.2,331.1L640.0,326.0L621.3,324.6ZM622.8,320.1L640.8,321.3L641.4,317.1L624.2,315.9ZM625.5,312.1L642.1,313.2L642.6,309.6L626.7,308.6ZM619.3,456.6L662.7,464.1L662.1,440.6L622.8,434.5ZM625.7,416.1L661.6,421.3L661.2,405.0L628.2,400.7ZM630.3,387.5L660.9,391.2L660.6,379.4L632.1,376.2ZM633.6,366.2L660.3,369.0L660.1,360.0L635.0,357.5ZM636.3,349.8L659.9,351.9L659.7,344.8L637.4,342.9ZM638.3,336.7L659.6,338.4L659.4,332.6L639.2,331.1ZM640.0,326.0L659.3,327.4L659.2,322.6L640.8,321.3ZM641.4,317.1L659.1,318.3L659.0,314.3L642.1,313.2ZM662.1,440.6L703.8,447.1L699.5,426.6L661.6,421.3ZM661.2,405.0L696.0,409.6L692.9,395.1L660.9,391.2ZM660.6,379.4L690.4,382.7L688.1,371.9L660.3,369.0ZM660.1,360.0L686.2,362.5L684.4,354.2L659.9,351.9ZM659.7,344.8L682.9,346.8L681.5,340.2L659.6,338.4ZM659.4,332.6L680.3,334.2L679.2,328.9L659.3,327.4ZM659.2,322.6L678.1,324.0L677.2,319.5L659.1,318.3ZM659.0,314.3L676.3,315.4L675.6,311.6L658.9,310.6ZM709.0,472.2L758.6,480.8L748.1,454.1L703.8,447.1ZM699.5,426.6L739.6,432.3L732.5,414.3L696.0,409.6ZM692.9,395.1L726.5,399.1L721.5,386.2L690.4,382.7ZM688.1,371.9L717.1,374.9L713.2,365.2L686.2,362.5ZM684.4,354.2L709.8,356.5L706.8,348.9L682.9,346.8ZM681.5,340.2L704.2,342.1L701.8,335.9L680.3,334.2ZM679.2,328.9L699.6,330.4L697.6,325.3L678.1,324.0ZM677.2,319.5L695.8,320.7L694.2,316.5L676.3,315.4ZM748.1,454.1L795.3,461.5L782.0,438.4L739.6,432.3ZM732.5,414.3L771.0,419.4L761.8,403.4L726.5,399.1ZM721.5,386.2L754.0,389.8L747.2,378.1L717.1,374.9ZM713.2,365.2L741.3,367.9L736.2,359.0L709.8,356.5ZM706.8,348.9L731.6,351.0L727.6,344.0L704.2,342.1ZM701.8,335.9L723.9,337.6L720.6,331.9L699.6,330.4ZM697.6,325.3L717.6,326.7L714.9,322.0L695.8,320.7ZM694.2,316.5L712.4,317.7L710.1,313.8L692.6,312.7ZM811.7,490.0L868.9,499.9L845.6,469.3L795.3,461.5ZM782.0,438.4L826.9,444.8L811.6,424.7L771.0,419.4ZM761.8,403.4L798.8,407.8L788.0,393.6L754.0,389.8ZM747.2,378.1L778.7,381.4L770.6,370.8L741.3,367.9ZM736.2,359.0L763.5,361.5L757.3,353.3L731.6,351.0ZM727.6,344.0L751.7,346.0L746.8,339.4L723.9,337.6ZM720.6,331.9L742.3,333.5L738.2,328.2L717.6,326.7ZM714.9,322.0L734.5,323.4L731.2,318.9L712.4,317.7Z" fill="#979797"/>
<path d="M315.1 403.8L506.8 301.2M318.4 377.8L833.9 454.0M356.7 411.0L527.9 302.5M351.8 362.4L808.9 421.1M401.7 418.8L549.8 303.9M379.2 349.6L790.0 396.3M450.7 427.3L572.5 305.3M402.0 339.0L775.3 376.9M504.3 436.6L596.1 306.7M421.4 330.0L763.5 361.5M563.0 446.8L620.5 308.2M438.1 322.3L753.9 348.8M627.8 458.1L645.9 309.8M452.5 315.6L745.8 338.2M699.5 470.5L672.2 311.4M465.2 309.8L739.0 329.2M779.4 484.4L699.6 313.1M476.4 304.6L733.2 321.5" stroke="#7a7a7a" stroke-opacity="0.35" stroke-width="1" stroke-dasharray="3 4" fill="none"/>
<polygon points="458,372 500.8,376.3 516.6,362.3 514,371 497,387 478,392 449,388" fill="#1a1a1a" fill-opacity="0.6"/>
<ellipse cx="536" cy="377.5" rx="23" ry="9" fill="#1a1a1a" fill-opacity="0.65"/>
<polygon points="455.1,329.0 499.4,333.0 500.8,376.3 458.9,370.7" fill="#3c3c3c"/><path d="M455.6 334.2L461.1 334.7L461.5 340.0L456.1 339.4ZM456.5 344.6L462.0 345.2L462.4 350.5L457.0 349.9ZM457.5 355.1L462.8 355.7L463.3 360.9L457.9 360.3ZM458.4 365.5L463.7 366.2L464.1 371.4L458.9 370.7ZM460.6 329.5L466.2 330.0L466.6 335.3L461.1 334.7ZM461.5 340.0L467.0 340.5L467.4 345.8L462.0 345.2ZM462.4 350.5L467.8 351.0L468.2 356.3L462.8 355.7ZM463.3 360.9L468.6 361.6L469.0 366.8L463.7 366.2ZM466.6 335.3L472.1 335.8L472.4 341.1L467.0 340.5ZM467.4 345.8L472.8 346.4L473.2 351.6L467.8 351.0ZM468.2 356.3L473.5 356.9L473.9 362.2L468.6 361.6ZM469.0 366.8L474.2 367.5L474.6 372.8L469.4 372.1ZM471.7 330.5L477.2 331.0L477.6 336.3L472.1 335.8ZM472.4 341.1L477.9 341.6L478.2 346.9L472.8 346.4ZM473.2 351.6L478.5 352.2L478.9 357.6L473.5 356.9ZM473.9 362.2L479.2 362.9L479.5 368.2L474.2 367.5ZM477.6 336.3L483.1 336.8L483.4 342.2L477.9 341.6ZM478.2 346.9L483.6 347.5L483.9 352.9L478.5 352.2ZM478.9 357.6L484.2 358.2L484.5 363.5L479.2 362.9ZM479.5 368.2L484.8 368.9L485.1 374.2L479.9 373.5ZM482.8 331.5L488.3 332.0L488.6 337.4L483.1 336.8ZM483.4 342.2L488.8 342.7L489.1 348.1L483.6 347.5ZM483.9 352.9L489.3 353.4L489.6 358.8L484.2 358.2ZM484.5 363.5L489.8 364.2L490.1 369.5L484.8 368.9ZM488.6 337.4L494.1 337.9L494.3 343.3L488.8 342.7ZM489.1 348.1L494.5 348.7L494.7 354.1L489.3 353.4ZM489.6 358.8L494.9 359.4L495.1 364.8L489.8 364.2ZM490.1 369.5L495.3 370.2L495.6 375.6L490.3 374.9ZM493.9 332.5L499.4 333.0L499.6 338.4L494.1 337.9ZM494.3 343.3L499.7 343.8L499.9 349.2L494.5 348.7ZM494.7 354.1L500.1 354.6L500.3 360.1L494.9 359.4ZM495.1 364.8L500.5 365.5L500.6 370.9L495.3 370.2Z" fill="#262626"/>
<polygon points="499.4,333.0 515.5,321.1 516.6,362.3 500.8,376.3" fill="#5a5a5a"/><path d="M499.6 338.4L501.6 336.9L501.8 342.3L499.7 343.8ZM499.9 349.2L501.9 347.7L502.1 353.0L500.1 354.6ZM500.3 360.1L502.3 358.4L502.4 363.8L500.5 365.5ZM500.6 370.9L502.6 369.2L502.8 374.6L500.8 376.3ZM501.4 331.5L503.4 330.0L503.6 335.4L501.6 336.9ZM501.8 342.3L503.8 340.7L503.9 346.1L501.9 347.7ZM502.1 353.0L504.1 351.4L504.3 356.8L502.3 358.4ZM502.4 363.8L504.4 362.1L504.6 367.5L502.6 369.2ZM503.6 335.4L505.6 333.9L505.8 339.2L503.8 340.7ZM503.9 346.1L505.9 344.5L506.1 349.8L504.1 351.4ZM504.3 356.8L506.2 355.1L506.4 360.4L504.4 362.1ZM504.6 367.5L506.6 365.7L506.7 371.1L504.8 372.8ZM505.4 328.5L507.4 327.1L507.6 332.3L505.6 333.9ZM505.8 339.2L507.8 337.6L507.9 342.9L505.9 344.5ZM506.1 349.8L508.1 348.2L508.2 353.5L506.2 355.1ZM506.4 360.4L508.4 358.7L508.5 364.0L506.6 365.7ZM507.6 332.3L509.6 330.8L509.8 336.1L507.8 337.6ZM507.9 342.9L509.9 341.3L510.1 346.6L508.1 348.2ZM508.2 353.5L510.2 351.8L510.4 357.1L508.4 358.7ZM508.5 364.0L510.5 362.3L510.7 367.6L508.7 369.3ZM509.5 325.6L511.5 324.1L511.6 329.3L509.6 330.8ZM509.8 336.1L511.8 334.5L511.9 339.7L509.9 341.3ZM510.1 346.6L512.1 344.9L512.2 350.2L510.2 351.8ZM510.4 357.1L512.4 355.4L512.5 360.6L510.5 362.3ZM511.6 329.3L513.6 327.8L513.8 333.0L511.8 334.5ZM511.9 339.7L513.9 338.1L514.1 343.3L512.1 344.9ZM512.2 350.2L514.2 348.5L514.3 353.7L512.4 355.4ZM512.5 360.6L514.5 358.9L514.6 364.1L512.7 365.8ZM513.5 322.6L515.5 321.1L515.6 326.3L513.6 327.8ZM513.8 333.0L515.8 331.4L515.9 336.6L513.9 338.1ZM514.1 343.3L516.0 341.7L516.2 346.9L514.2 348.5ZM514.3 353.7L516.3 352.0L516.5 357.1L514.5 358.9Z" fill="#474747"/>
<polygon points="471.2,317.1 515.5,321.1 499.4,333.0 455.1,329.0" fill="#a2a2a2"/><path d="M469.2 318.6L474.7 319.1L472.7 320.6L467.2 320.1ZM465.2 321.6L470.7 322.1L468.7 323.6L463.1 323.1ZM461.1 324.5L466.7 325.0L464.7 326.5L459.1 326.0ZM457.1 327.5L462.7 328.0L460.6 329.5L455.1 329.0ZM476.7 317.6L482.3 318.1L480.3 319.6L474.7 319.1ZM472.7 320.6L478.2 321.1L476.2 322.6L470.7 322.1ZM468.7 323.6L474.2 324.1L472.2 325.5L466.7 325.0ZM464.7 326.5L470.2 327.0L468.2 328.5L462.7 328.0ZM480.3 319.6L485.8 320.1L483.8 321.6L478.2 321.1ZM476.2 322.6L481.8 323.1L479.8 324.6L474.2 324.1ZM472.2 325.5L477.8 326.0L475.7 327.5L470.2 327.0ZM468.2 328.5L473.7 329.0L471.7 330.5L466.2 330.0ZM487.8 318.6L493.4 319.1L491.3 320.6L485.8 320.1ZM483.8 321.6L489.3 322.1L487.3 323.6L481.8 323.1ZM479.8 324.6L485.3 325.1L483.3 326.5L477.8 326.0ZM475.7 327.5L481.3 328.0L479.3 329.5L473.7 329.0ZM491.3 320.6L496.9 321.1L494.9 322.6L489.3 322.1ZM487.3 323.6L492.9 324.1L490.8 325.6L485.3 325.1ZM483.3 326.5L488.8 327.0L486.8 328.5L481.3 328.0ZM479.3 329.5L484.8 330.0L482.8 331.5L477.2 331.0ZM498.9 319.6L504.4 320.1L502.4 321.6L496.9 321.1ZM494.9 322.6L500.4 323.1L498.4 324.6L492.9 324.1ZM490.8 325.6L496.4 326.1L494.4 327.5L488.8 327.0ZM486.8 328.5L492.3 329.0L490.3 330.5L484.8 330.0ZM502.4 321.6L507.9 322.1L505.9 323.6L500.4 323.1ZM498.4 324.6L503.9 325.1L501.9 326.6L496.4 326.1ZM494.4 327.5L499.9 328.0L497.9 329.5L492.3 329.0ZM490.3 330.5L495.9 331.0L493.9 332.5L488.3 332.0ZM510.0 320.6L515.5 321.1L513.5 322.6L507.9 322.1ZM505.9 323.6L511.5 324.1L509.5 325.6L503.9 325.1ZM501.9 326.6L507.4 327.1L505.4 328.5L499.9 328.0ZM497.9 329.5L503.4 330.0L501.4 331.5L495.9 331.0Z" fill="#8c8c8c"/>
<circle cx="549" cy="342.6" r="22" fill="url(#sph)"/>
<g clip-path="url(#sphc)"><path d="M525.6 319.2h5.2v5.2h-5.2zM525.6 329.6h5.2v5.2h-5.2zM525.6 340.0h5.2v5.2h-5.2zM525.6 350.4h5.2v5.2h-5.2zM525.6 360.8h5.2v5.2h-5.2zM530.8 324.4h5.2v5.2h-5.2zM530.8 334.8h5.2v5.2h-5.2zM530.8 345.2h5.2v5.2h-5.2zM530.8 355.6h5.2v5.2h-5.2zM536.0 319.2h5.2v5.2h-5.2zM536.0 329.6h5.2v5.2h-5.2zM536.0 340.0h5.2v5.2h-5.2zM536.0 350.4h5.2v5.2h-5.2zM536.0 360.8h5.2v5.2h-5.2zM541.2 324.4h5.2v5.2h-5.2zM541.2 334.8h5.2v5.2h-5.2zM541.2 345.2h5.2v5.2h-5.2zM541.2 355.6h5.2v5.2h-5.2zM546.4 319.2h5.2v5.2h-5.2zM546.4 329.6h5.2v5.2h-5.2zM546.4 340.0h5.2v5.2h-5.2zM546.4 350.4h5.2v5.2h-5.2zM546.4 360.8h5.2v5.2h-5.2zM551.6 324.4h5.2v5.2h-5.2zM551.6 334.8h5.2v5.2h-5.2zM551.6 345.2h5.2v5.2h-5.2zM551.6 355.6h5.2v5.2h-5.2zM556.8 319.2h5.2v5.2h-5.2zM556.8 329.6h5.2v5.2h-5.2zM556.8 340.0h5.2v5.2h-5.2zM556.8 350.4h5.2v5.2h-5.2zM556.8 360.8h5.2v5.2h-5.2zM562.0 324.4h5.2v5.2h-5.2zM562.0 334.8h5.2v5.2h-5.2zM562.0 345.2h5.2v5.2h-5.2zM562.0 355.6h5.2v5.2h-5.2zM567.2 319.2h5.2v5.2h-5.2zM567.2 329.6h5.2v5.2h-5.2zM567.2 340.0h5.2v5.2h-5.2zM567.2 350.4h5.2v5.2h-5.2zM567.2 360.8h5.2v5.2h-5.2z" fill="#000" fill-opacity="0.26"/></g>
<line x1="539" y1="146" x2="539" y2="627" stroke="#dadada" stroke-width="1.8"/>
<g stroke="#f0f0f0" stroke-width="2.2" stroke-linecap="round" fill="none"><path d="M529 376l3 3M549 376l-3 3M537 385h4"/></g>
<g transform="translate(551,378)" fill="none" stroke="#f4f4f4" stroke-width="2.8" stroke-linejoin="round"><circle cx="6.5" cy="8.5" r="4.3"/><circle cx="15" cy="6" r="4.3"/><rect x="2.5" y="12.5" width="15" height="10" rx="1.5"/><path d="M17.5 16l8-4v11l-8-4z"/></g>
</g>
<g><circle cx="787" cy="192.3" r="7.5" fill="#b42f48" stroke="#e05a70" stroke-width="1"/><circle cx="823.6" cy="183.7" r="7.5" fill="#3b75ba" stroke="#5b95da" stroke-width="1"/><line x1="815.6" y1="196" x2="815" y2="168.5" stroke="#8ed22f" stroke-width="2.2"/><line x1="815.6" y1="196" x2="843" y2="198.7" stroke="#e9435c" stroke-width="2.2"/><line x1="815.6" y1="196" x2="807" y2="207.5" stroke="#3c95ea" stroke-width="2.2"/><circle cx="815" cy="168.5" r="8" fill="#8fd12d"/><circle cx="843" cy="198.7" r="8" fill="#e9435c"/><circle cx="807" cy="207.5" r="8" fill="#3c95ea"/><circle cx="815" cy="222.5" r="7.5" fill="#6a9a1f" stroke="#8bc23a" stroke-width="1"/><text x="815" y="173.3" font-family="Liberation Sans" font-size="13" font-weight="bold" fill="#111" text-anchor="middle">Y</text><text x="843" y="203.5" font-family="Liberation Sans" font-size="13" font-weight="bold" fill="#111" text-anchor="middle">X</text><text x="807" y="212.3" font-family="Liberation Sans" font-size="13" font-weight="bold" fill="#111" text-anchor="middle">Z</text></g>
<rect x="223" y="156" width="104" height="28" rx="3" fill="#6b6f77" fill-opacity="0.85"/>
<g fill="#e8e8e8"><circle cx="234.8" cy="162.5" r="1.9"/><circle cx="234.8" cy="169.7" r="1.9"/><circle cx="234.8" cy="176.9" r="1.9"/></g>
<text x="247.3" y="175.2" font-family="Liberation Sans" font-size="14" fill="#dcdde0" letter-spacing="0.3">Perspective</text>
<rect x="214" y="147" width="650" height="479" fill="none" stroke="#7c99b5" stroke-width="2"/>
</svg>
<div style="position:absolute;left:213px;top:631px;width:652px;height:40px;background:#363d4a;border-radius:4px;"></div>
<div class="t" style="left:223.8px;top:645.15px;font-size:14px;color:#cdcfd2;letter-spacing:0.7950000000000003px;">Output</div>
<div class="t" style="left:286.1px;top:645.15px;font-size:14px;color:#cdcfd2;letter-spacing:0.5444196428571421px;">Debugger</div>
<div class="t" style="left:369.2px;top:645.15px;font-size:14px;color:#cdcfd2;letter-spacing:0.4484375000000007px;">Audio</div>
<div class="t" style="left:423.8px;top:645.15px;font-size:14px;color:#cdcfd2;letter-spacing:0.7056640625000004px;">Animation</div>
<div class="t" style="left:508.2px;top:645.15px;font-size:14px;color:#cdcfd2;letter-spacing:0.28294270833333357px;">Shader Editor</div>
<svg style="position:absolute;left:776.3px;top:644.2px;" width="16" height="16" viewBox="0 0 16 16"><path d="M3 12c1.5-1.5 1.5-3 1.5-5A3.5 3.5 0 0 1 11.5 7c0 2 0 3.5 1.5 5z" fill="#4e535b"/><circle cx="8" cy="13.5" r="1.5" fill="#4e535b"/></svg>
<div class="t" style="left:802px;top:645.15px;font-size:14px;color:#9a9da3;letter-spacing:0.3px;">4.3.dev6</div>
<div style="position:absolute;left:869px;top:80px;width:583px;height:591px;background:#363d4a;border-radius:4px;"></div>
<div style="position:absolute;left:954px;top:80px;width:498px;height:28px;background:#252b34;border-radius:0 4px 0 0;"></div>
<div style="position:absolute;left:869px;top:80px;width:85px;height:2px;background:#6591bb;border-radius:3px 3px 0 0;"></div>
<div class="t" style="left:880px;top:87.87px;font-size:13.5px;color:#cdcfd2;letter-spacing:0.8341796875000007px;">Inspector</div>
<div class="t" style="left:965.3px;top:87.87px;font-size:13.5px;color:#858991;letter-spacing:0.8088541666666677px;">Node</div>
<div class="t" style="left:1023.4px;top:87.87px;font-size:13.5px;color:#858991;letter-spacing:0.2px;">History</div>
<svg style="position:absolute;left:1436.0px;top:86.0px;" width="16" height="16" viewBox="0 0 16 16"><g fill="#8e9196"><circle cx="8" cy="1.50" r="1.9"/><circle cx="8" cy="8" r="1.9"/><circle cx="8" cy="14.50" r="1.9"/></g></svg>
<svg style="position:absolute;left:879.3px;top:119.0px;" width="16" height="16" viewBox="0 0 16 16"><path d="M2 1h7l4 4v4h-2v2H9v4H2z" fill="#e0e0e0"/><path d="M9 1v4h4" fill="#b0b0b0"/><path d="M12 9v6M9 12h6" stroke="#5fff97" stroke-width="2"/></svg>
<svg style="position:absolute;left:911.0px;top:119.0px;" width="16" height="16" viewBox="0 0 16 16"><path d="M1.5 13.5V3.5h4.5l1.5 1.5h5v2" fill="none" stroke="#e0e0e0" stroke-width="1.6"/><path d="M3.5 7.5h12l-2 6.5H1.5z" fill="#e0e0e0"/></svg>
<svg style="position:absolute;left:943.0px;top:119.0px;" width="16" height="16" viewBox="0 0 16 16"><path d="M1 2a1 1 0 0 1 1-1h10l3 3v10a1 1 0 0 1-1 1H2a1 1 0 0 1-1-1z" fill="#8a8c90"/><rect x="4" y="1" width="6" height="4" fill="#363d4a"/><rect x="7.5" y="1.5" width="2" height="3" fill="#8a8c90"/><circle cx="8" cy="10.5" r="1.8" fill="#363d4a"/></svg>
<svg style="position:absolute;left:975.0px;top:119.0px;" width="16" height="16" viewBox="0 0 16 16"><g fill="#e0e0e0"><circle cx="8" cy="1.50" r="1.9"/><circle cx="8" cy="8" r="1.9"/><circle cx="8" cy="14.50" r="1.9"/></g></svg>
<svg style="position:absolute;left:1374.2px;top:119.0px;" width="16" height="16" viewBox="0 0 16 16"><path d="M10 2.5L5.5 8L10 13.5" fill="none" stroke="#e0e0e0" stroke-width="1.8"/></svg>
<svg style="position:absolute;left:1398.0px;top:119.0px;" width="16" height="16" viewBox="0 0 16 16"><path d="M6 2.5L10.5 8L6 13.5" fill="none" stroke="#777a80" stroke-width="1.8"/></svg>
<svg style="position:absolute;left:1426.2px;top:119.0px;" width="16" height="16" viewBox="0 0 16 16"><path d="M3.2 6A5.5 5.5 0 1 1 4.5 12.5" fill="none" stroke="#e0e0e0" stroke-width="1.8"/><path d="M0.5 5.5h5.5L3 9z" fill="#e0e0e0"/><path d="M8.5 4.5v4h3" fill="none" stroke="#e0e0e0" stroke-width="1.8"/></svg>
<div style="position:absolute;left:873px;top:144px;width:543px;height:30px;background:#222731;border-radius:3px;"></div>
<svg style="position:absolute;left:877.0px;top:151.0px;" width="16" height="16" viewBox="0 0 16 16"><defs><clipPath id="gl88501590"><rect x="0" y="0" width="8" height="16"/></clipPath></defs><g fill="none" stroke-width="1.6"><g stroke="#8da5f3"><circle cx="8" cy="8" r="6.2"/><ellipse cx="8" cy="8" rx="2.6" ry="6.2"/><path d="M2 9h12"/></g><g stroke="#fc7f7f" clip-path="url(#gl88501590)"><circle cx="8" cy="8" r="6.2"/><ellipse cx="8" cy="8" rx="2.6" ry="6.2"/><path d="M2 9h12"/></g></g></svg>
<div class="t" style="left:901px;top:152.65px;font-size:14px;color:#cdcfd2;letter-spacing:0.3px;">WorldEnvironment</div>
<svg style="position:absolute;left:1395.6px;top:150.6px;" width="16" height="16" viewBox="0 0 16 16"><path d="M3.0 5.5L8 10.5L13.0 5.5" fill="none" stroke="#e0e0e0" stroke-width="2"/></svg>
<svg style="position:absolute;left:1426.0px;top:151.0px;" width="16" height="16" viewBox="0 0 16 16"><circle cx="9.6" cy="4.6" r="3" fill="none" stroke="#e0e0e0" stroke-width="1.8"/><path d="M7.3 6.9L5 9.2" stroke="#e0e0e0" stroke-width="1.9" stroke-linecap="round"/><text x="8" y="15.6" font-family="Liberation Sans" font-weight="bold" font-size="7.4" fill="#e0e0e0" text-anchor="middle" letter-spacing="-0.2">DOC</text></svg>
<div style="position:absolute;left:873px;top:178px;width:543px;height:29px;background:#222731;border-radius:3px;"></div>
<div class="t" style="left:879px;top:185.65px;font-size:14px;color:#a3a6ac;letter-spacing:0.3px;">Filter Properties</div>
<svg style="position:absolute;left:1393.0px;top:183.8px;" width="16" height="16" viewBox="0 0 16 16"><g fill="none" stroke="#e0e0e0" stroke-width="2"><circle cx="6.5" cy="6.5" r="4.2"/><path d="M9.6 9.6l4.4 4.4" stroke-linecap="round"/></g></svg>
<svg style="position:absolute;left:1426.0px;top:184.0px;" width="16" height="16" viewBox="0 0 16 16"><g fill="#e0e0e0"><path d="M3 1h2v6h1.5v5.5a2.5 2.5 0 0 1-5 0V7H3z"/><path d="M10 1c0 2 0 3 1.5 4.5V15h2V5.5C15 4 15 3 15 1h-1.5v3h-2V1z"/></g></svg>
<div style="position:absolute;left:873px;top:211px;width:575px;height:456px;background:#21262e;border-radius:3px;"></div>
<div style="position:absolute;left:1438.5px;top:214px;width:6.5px;height:449px;background:#2b3039;border-radius:3px;"></div>
<div style="position:absolute;left:1438.5px;top:214px;width:6.5px;height:259px;background:#6b6f76;border-radius:3px;"></div>
<div style="position:absolute;left:877.5px;top:215px;width:554.5px;height:23.5px;background:#41464f;border-radius:3px;"></div>
<svg style="position:absolute;left:1076.7px;top:218.9px;" width="16" height="16" viewBox="0 0 16 16"><defs><clipPath id="gl108472269"><rect x="0" y="0" width="8" height="16"/></clipPath></defs><g fill="none" stroke-width="1.6"><g stroke="#8da5f3"><circle cx="8" cy="8" r="6.2"/><ellipse cx="8" cy="8" rx="2.6" ry="6.2"/><path d="M2 9h12"/></g><g stroke="#fc7f7f" clip-path="url(#gl108472269)"><circle cx="8" cy="8" r="6.2"/><ellipse cx="8" cy="8" rx="2.6" ry="6.2"/><path d="M2 9h12"/></g></g></svg>
<div class="t" style="left:1099px;top:219.35px;font-size:14px;color:#dfe0e2;letter-spacing:0.4356249999999998px;font-weight:bold;">WorldEnvironment</div>
<div class="t" style="left:885.3px;top:245.85px;font-size:14px;color:#cdcfd2;letter-spacing:0.3px;">Environment</div>
<svg style="position:absolute;left:1135.8px;top:245.9px;" width="16" height="16" viewBox="0 0 16 16"><path d="M8.6 13.6A5.4 5.4 0 1 0 3.6 8.2" fill="none" stroke="#e0e0e0" stroke-width="2"/><path d="M0.4 7.4h6.2L3.5 11.6z" fill="#e0e0e0"/></svg>
<svg style="position:absolute;left:1160.8px;top:245.9px;" width="16" height="16" viewBox="0 0 16 16"><g fill="none" stroke="#e0e0e0" stroke-width="1.6"><circle cx="8" cy="8" r="6.3"/><ellipse cx="8" cy="8" rx="2.6" ry="6.3"/><path d="M2 9h12"/></g></svg>
<div class="t" style="left:1248px;top:247.15px;font-size:14px;color:#cdcfd2;letter-spacing:0.3px;">Environment</div>
<svg style="position:absolute;left:1410.6px;top:246.7px;" width="16" height="16" viewBox="0 0 16 16"><path d="M4.0 6.0L8 10.0L12.0 6.0" fill="none" stroke="#e0e0e0" stroke-width="1.8"/></svg>
<div class="t" style="left:885.3px;top:279.85px;font-size:14px;color:#cdcfd2;letter-spacing:0.3px;">Camera Attributes</div>
<div class="t" style="left:1251px;top:281.15px;font-size:14px;color:#cdcfd2;letter-spacing:0.3px;">&lt;empty&gt;</div>
<svg style="position:absolute;left:1410.6px;top:280.5px;" width="16" height="16" viewBox="0 0 16 16"><path d="M4.0 6.0L8 10.0L12.0 6.0" fill="none" stroke="#e0e0e0" stroke-width="1.8"/></svg>
<div style="position:absolute;left:877.5px;top:307px;width:278px;height:31.5px;background:#436893;border-radius:3px 0 0 0;"></div>
<div class="t" style="left:885.3px;top:314.15px;font-size:14px;color:#eef0f2;letter-spacing:0.3px;">Compositor</div>
<svg style="position:absolute;left:1135.8px;top:314.0px;" width="16" height="16" viewBox="0 0 16 16"><path d="M8.6 13.6A5.4 5.4 0 1 0 3.6 8.2" fill="none" stroke="#e0e0e0" stroke-width="2"/><path d="M0.4 7.4h6.2L3.5 11.6z" fill="#e0e0e0"/></svg>
<svg style="position:absolute;left:1160.8px;top:314.0px;" width="16" height="16" viewBox="0 0 16 16"><path d="M8 0.8l7 3.6v7.2L8 15.2l-7-3.6V4.4z" fill="#70bafa"/><path d="M4 5.5L8 3.5l4 2-4 2z" fill="#1d2229" opacity="0.85"/><path d="M4 6.5l3.3 1.7v4.3L4 10.8z" fill="#1d2229" opacity="0.85"/></svg>
<div class="t" style="left:1251px;top:315.65px;font-size:14px;color:#72b4f0;letter-spacing:0.3px;">Compositor</div>
<svg style="position:absolute;left:1410.6px;top:314.5px;" width="16" height="16" viewBox="0 0 16 16"><path d="M4.0 6.0L8 10.0L12.0 6.0" fill="none" stroke="#e0e0e0" stroke-width="1.8"/></svg>
<div style="position:absolute;left:878.5px;top:338.3px;width:553px;height:329px;background:#262e3b;border-left:1px solid #5b88b5;border-right:1px solid #5b88b5;box-sizing:border-box;"></div>
<div style="position:absolute;left:1155.5px;top:337.5px;width:276px;height:1px;background:#5b88b5;"></div>
<div class="t" style="left:889.2px;top:347.55px;font-size:14px;color:#a9acb2;letter-spacing:0.35257352941176506px;">Compositor Effects</div>
<svg style="position:absolute;left:1135.8px;top:347.5px;" width="16" height="16" viewBox="0 0 16 16"><path d="M8.6 13.6A5.4 5.4 0 1 0 3.6 8.2" fill="none" stroke="#e0e0e0" stroke-width="2"/><path d="M0.4 7.4h6.2L3.5 11.6z" fill="#e0e0e0"/></svg>
<div style="position:absolute;left:1155.5px;top:341.3px;width:272px;height:29px;background:#222731;border-radius:3px;"></div>
<div class="t" style="left:1187px;top:350.15px;font-size:14px;color:#72b4f0;letter-spacing:0.3px;">Array[CompositorEffect] (size 1)</div>
<div style="position:absolute;left:881.2px;top:375px;width:547px;height:292px;background:#21262e;"></div>
<div class="t" style="left:889px;top:385.85px;font-size:14px;color:#cdcfd2;letter-spacing:-0.4308593750000007px;">Size:</div>
<div style="position:absolute;left:1156.2px;top:379.5px;width:267px;height:26px;background:#262b35;border-radius:3px;"></div>
<div class="t" style="left:1173px;top:385.65px;font-size:14px;color:#cdcfd2;letter-spacing:0.3px;">1</div>
<svg style="position:absolute;left:1401.5px;top:385.0px;" width="16" height="16" viewBox="0 0 16 16"><path d="M4 6l4-4 4 4M4 10l4 4 4-4" fill="none" stroke="#e0e0e0" stroke-width="1.8"/></svg>
<div style="position:absolute;left:885.3px;top:412.3px;width:28px;height:255px;background:#252a33;border-radius:3px;"></div>
<svg style="position:absolute;left:890.8px;top:574.4px;" width="16" height="16" viewBox="0 0 16 16"><g fill="#e0e0e0"><rect x="2" y="3.5" width="12" height="2"/><rect x="2" y="7" width="12" height="2"/><rect x="2" y="10.5" width="12" height="2"/></g></svg>
<div style="position:absolute;left:1396.3px;top:412.3px;width:27px;height:255px;background:#252a33;border-radius:3px;"></div>
<svg style="position:absolute;left:1401.5px;top:573.4px;" width="16" height="16" viewBox="0 0 16 16"><g fill="#e0e0e0"><rect x="1.5" y="2.5" width="13" height="2"/><rect x="6" y="1" width="4" height="2"/><path d="M3 5.5h10v9.5H3z"/></g><g fill="#252a33"><rect x="5" y="7" width="1.3" height="6.5"/><rect x="7.35" y="7" width="1.3" height="6.5"/><rect x="9.7" y="7" width="1.3" height="6.5"/></g></svg>
<div style="position:absolute;left:917.4px;top:412.3px;width:238px;height:31.4px;background:#564d97;border-radius:3px 0 0 0;"></div>
<div class="t" style="left:926.5px;top:419.05px;font-size:14px;color:#eceaf5;letter-spacing:0.3px;">0</div>
<div style="position:absolute;left:1155.5px;top:412.3px;width:237px;height:29px;background:#222731;border-radius:3px;"></div>
<svg style="position:absolute;left:1160.7px;top:419.5px;" width="16" height="16" viewBox="0 0 16 16"><path d="M8 0.8l7 3.6v7.2L8 15.2l-7-3.6V4.4z" fill="#70bafa"/><path d="M4 5.5L8 3.5l4 2-4 2z" fill="#1d2229" opacity="0.85"/><path d="M4 6.5l3.3 1.7v4.3L4 10.8z" fill="#1d2229" opacity="0.85"/></svg>
<div class="t" style="left:1207.6px;top:420.65px;font-size:14px;color:#72b4f0;letter-spacing:0.0419921875px;">PostProcessShader</div>
<svg style="position:absolute;left:1371.0px;top:419.5px;" width="16" height="16" viewBox="0 0 16 16"><path d="M4.0 6.0L8 10.0L12.0 6.0" fill="none" stroke="#e0e0e0" stroke-width="1.8"/></svg>
<div style="position:absolute;left:917.4px;top:442px;width:474px;height:226px;background:#2b2f44;border-left:1.5px solid #5c52a0;border-top:1.5px solid #5c52a0;border-right:1.5px solid #5c52a0;box-sizing:border-box;"></div>
<div class="t" style="left:929.2px;top:450.15px;font-size:14px;color:#a9acb2;letter-spacing:0.06984374999999972px;">Shader Code</div>
<svg style="position:absolute;left:1372.8px;top:450.0px;" width="16" height="16" viewBox="0 0 16 16"><path d="M8.6 13.6A5.4 5.4 0 1 0 3.6 8.2" fill="none" stroke="#e0e0e0" stroke-width="2"/><path d="M0.4 7.4h6.2L3.5 11.6z" fill="#e0e0e0"/></svg>
<div style="position:absolute;left:921.8px;top:474.8px;width:466.8px;height:118.5px;background:#262a34;border-radius:2px;"></div>
<div style="position:absolute;left:1359.8px;top:474.8px;width:28.8px;height:118.5px;background:#1f242b;border-radius:0 2px 2px 0;"></div>
<div class="t" style="left:927.5px;top:483.15px;font-size:14px;color:#cdcfd2;letter-spacing:0.2373833955223884px;">float gray = color.r * 0.2125 + color.g * 0.7154 + color.b * 0.0721;</div>
<div class="t" style="left:927.5px;top:506.95px;font-size:14px;color:#cdcfd2;letter-spacing:0.05px;">color.rgb = vec3(gray);</div>
<svg style="position:absolute;left:1366.0px;top:526.0px;" width="16" height="16" viewBox="0 0 16 16"><g stroke="#e0e0e0" stroke-width="1.8" fill="none"><path d="M1.5 6V1.5H6M1.5 1.5l4.5 4.5M10 1.5h4.5V6M14.5 1.5L10 6M1.5 10v4.5H6M1.5 14.5L6 10M14.5 10v4.5H10M14.5 14.5L10 10"/></g></svg>
<div class="t" style="left:929.2px;top:604.15px;font-size:14px;color:#a9acb2;letter-spacing:0.17031250000000023px;">Enabled</div>
<div style="position:absolute;left:1155px;top:598.2px;width:233px;height:27.5px;background:#222731;border-radius:3px;"></div>
<svg style="position:absolute;left:1159.0px;top:604.0px;" width="16" height="16" viewBox="0 0 16 16"><rect x="1" y="1" width="14" height="14" rx="2" fill="#70bafa"/><path d="M4 8.2l2.6 2.6L12 5.3" fill="none" stroke="#fff" stroke-width="2"/></svg>
<div class="t" style="left:1183.5px;top:605.15px;font-size:14px;color:#72b4f0;letter-spacing:0.3px;">On</div>
<div class="t" style="left:929.2px;top:636.55px;font-size:14px;color:#a9acb2;letter-spacing:0.12080592105263203px;">Effect Callback Type</div>
<div style="position:absolute;left:1155px;top:630px;width:233px;height:29.6px;background:#222731;border-radius:3px;"></div>
<div class="t" style="left:1161.3px;top:638.05px;font-size:14px;color:#cdcfd2;letter-spacing:0.3px;">Post Transparent</div>
<svg style="position:absolute;left:1369.8px;top:636.5px;" width="16" height="16" viewBox="0 0 16 16"><path d="M3.5 5.75L8 10.25L12.5 5.75" fill="none" stroke="#e0e0e0" stroke-width="1.8"/></svg>
<div style="position:absolute;left:1155px;top:664px;width:233px;height:10px;background:#222731;border-radius:3px;"></div>
<div style="position:absolute;left:869px;top:667px;width:583px;height:4px;background:#363d4a;"></div>
<div style="position:absolute;left:1px;top:671px;width:1459px;height:8px;background:#1d2229;border-radius:0 0 8px 8px;"></div>
</div></body></html>
